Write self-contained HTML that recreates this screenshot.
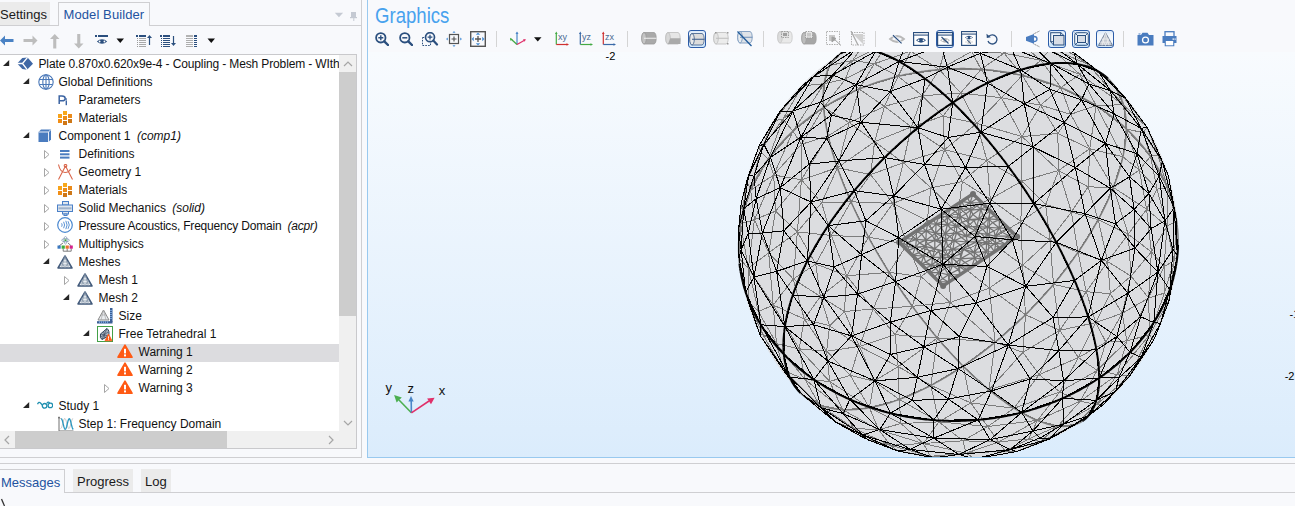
<!DOCTYPE html>
<html><head><meta charset="utf-8">
<style>
*{margin:0;padding:0;box-sizing:border-box}
html,body{width:1295px;height:506px;overflow:hidden;background:#f8f9fc;font-family:"Liberation Sans",sans-serif;color:#1a1a1a}
.abs{position:absolute}
.tt{position:absolute;height:18px;line-height:18px;font-size:12px;white-space:nowrap;color:#111}
.tt i{font-style:italic}
.sep{position:absolute;width:1px;background:#d4d4d4}
</style></head><body>
<!-- left tabs -->
<div class="abs" style="left:0;top:2px;width:50px;height:23px;background:#ebebeb"></div>
<div class="abs" style="left:0;top:2px;height:23px;line-height:25px;font-size:13px;color:#1a1a1a">Settings</div>
<div class="abs" style="left:0;top:25px;width:58px;height:1px;background:#cfcfd2"></div>
<div class="abs" style="left:58px;top:2px;width:92px;height:24px;border:1px solid #cfcfd2;border-bottom:none;background:#f8f9fc"></div>
<div class="abs" style="left:63.5px;top:2px;height:23px;line-height:25px;font-size:13px;color:#2353a0;letter-spacing:0.1px">Model Builder</div>
<div class="abs" style="left:150px;top:25px;width:212px;height:1px;background:#cfcfd2"></div>
<svg class="abs" style="left:334px;top:12px" width="24" height="10"><path d="M0.8 0.7 L9.1 0.7 L4.95 5.2 Z" fill="#c5cad3"/><rect x="17" y="-1" width="5" height="6.2" fill="#c5cad3"/><rect x="16" y="5" width="7" height="1.2" fill="#c5cad3"/><rect x="19.3" y="6" width="1" height="3" fill="#c5cad3"/></svg>
<!-- panel right border -->
<div class="abs" style="left:361px;top:0;width:1px;height:458px;background:#cfcfd2"></div>
<div class="abs" style="left:0;top:457px;width:362px;height:1px;background:#cfcfd2"></div>
<!-- tree box -->
<div class="abs" style="left:-1px;top:54px;width:358px;height:395px;border:1px solid #c9c9cc;background:#fff;overflow:hidden">
 <div class="abs" style="left:0;top:0;width:339px;height:376px;overflow:hidden">
<svg style="position:absolute;left:2.8px;top:4.5px" width="7" height="7" viewBox="0 0 7 7"><path d="M6.2 0 L6.2 6 L0 6 Z" fill="#262626"/></svg>
<svg style="position:absolute;left:17px;top:1px" width="17" height="16" viewBox="0 0 17 16"><path d="M0.2 7.5 L5.3 2 L10.6 1.4 L16 7.7 L10 13.8 L5.3 13.1 Z" fill="#3f67a5"/><path d="M0 7.5 L5.5 7.5 L10.6 1.4 M5.5 7.5 L10.4 13.8" fill="none" stroke="#fff" stroke-width="1.3"/></svg>
<div class="tt" style="left:38.5px;top:0px;letter-spacing:-0.13px;">Plate 0.870x0.620x9e-4 - Coupling - Mesh Problem - WIth</div>
<svg style="position:absolute;left:22.8px;top:22.5px" width="7" height="7" viewBox="0 0 7 7"><path d="M6.2 0 L6.2 6 L0 6 Z" fill="#262626"/></svg>
<svg style="position:absolute;left:38px;top:19px" width="16" height="16" viewBox="0 0 16 16"><g fill="none" stroke="#4a78b8" stroke-width="1.1"><circle cx="8" cy="8" r="7.2"/><ellipse cx="8" cy="8" rx="3.2" ry="7.2"/><path d="M8 0.8 V15.2 M1.5 5.5 H14.5 M1.5 10.5 H14.5"/></g></svg>
<div class="tt" style="left:58.5px;top:18px;">Global Definitions</div>
<svg style="position:absolute;left:57.6px;top:40px" width="12" height="14" viewBox="0 0 12 14"><path d="M1.2 9 V1 H4 Q7.2 1 7.2 3.4 Q7.2 5.8 4 5.8 H1.2" fill="none" stroke="#3c64a2" stroke-width="1.5"/><rect x="7.6" y="3.4" width="1.4" height="1.3" fill="#3c64a2"/><rect x="7.6" y="5.4" width="1.4" height="4.8" fill="#3c64a2"/></svg>
<div class="tt" style="left:78.5px;top:36px;">Parameters</div>
<svg style="position:absolute;left:58px;top:56px" width="16" height="15" viewBox="0 0 16 15"><g shape-rendering="crispEdges"><rect x="5" y="0" width="4" height="4" fill="#f7a81b"/><rect x="0" y="3" width="4" height="4" fill="#f8a31a"/><rect x="5" y="5" width="4" height="4" fill="#ec8d18"/><rect x="10" y="3" width="4" height="4" fill="#ea8a1a"/><rect x="0" y="8" width="4" height="4" fill="#f18e16"/><rect x="10" y="8" width="4" height="4" fill="#cd7818"/><rect x="5" y="10" width="4" height="4" fill="#cf7616"/></g></svg>
<div class="tt" style="left:78.5px;top:54px;">Materials</div>
<svg style="position:absolute;left:22.8px;top:76.5px" width="7" height="7" viewBox="0 0 7 7"><path d="M6.2 0 L6.2 6 L0 6 Z" fill="#262626"/></svg>
<svg style="position:absolute;left:38px;top:74px" width="14" height="14" viewBox="0 0 14 14"><path d="M0.5 3 L3 0.5 L13 0.5 L13 10.5 L10.5 13 L0.5 13 Z" fill="#4a7cbf"/><path d="M0.5 3 L10.5 3 L10.5 13 M10.5 3 L13 0.5" fill="none" stroke="#e8eef7" stroke-width="1"/></svg>
<div class="tt" style="left:58.5px;top:72px;">Component 1 <i style="margin-left:3px">(comp1)</i></div>
<svg style="position:absolute;left:43.5px;top:94.5px" width="7" height="10" viewBox="0 0 7 10"><path d="M0.5 0.5 L5 4.5 L0.5 8.5 Z" fill="none" stroke="#a6a6a6" stroke-width="1"/></svg>
<svg style="position:absolute;left:59.7px;top:94.5px" width="10" height="9" viewBox="0 0 10 9"><g fill="#4a7cbf"><rect x="0" y="0" width="9.5" height="2"/><rect x="0" y="3.3" width="9.5" height="2"/><rect x="0" y="6.6" width="9.5" height="2"/></g></svg>
<div class="tt" style="left:78.5px;top:90px;">Definitions</div>
<svg style="position:absolute;left:43.5px;top:112.5px" width="7" height="10" viewBox="0 0 7 10"><path d="M0.5 0.5 L5 4.5 L0.5 8.5 Z" fill="none" stroke="#a6a6a6" stroke-width="1"/></svg>
<svg style="position:absolute;left:57.5px;top:108.8px" width="16" height="16" viewBox="0 0 16 16"><g fill="none" stroke="#d9664b" stroke-width="1.1"><path d="M7.5 2 L0.5 15.5 M7.5 2 L14.5 15.5"/><circle cx="7.5" cy="1.8" r="1.3"/><path d="M0.5 0.5 Q2 8 7 8.5 Q11 8.5 12.5 5"/></g></svg>
<div class="tt" style="left:78.5px;top:108px;">Geometry 1</div>
<svg style="position:absolute;left:43.5px;top:130.5px" width="7" height="10" viewBox="0 0 7 10"><path d="M0.5 0.5 L5 4.5 L0.5 8.5 Z" fill="none" stroke="#a6a6a6" stroke-width="1"/></svg>
<svg style="position:absolute;left:58px;top:128px" width="16" height="15" viewBox="0 0 16 15"><g shape-rendering="crispEdges"><rect x="5" y="0" width="4" height="4" fill="#f7a81b"/><rect x="0" y="3" width="4" height="4" fill="#f8a31a"/><rect x="5" y="5" width="4" height="4" fill="#ec8d18"/><rect x="10" y="3" width="4" height="4" fill="#ea8a1a"/><rect x="0" y="8" width="4" height="4" fill="#f18e16"/><rect x="10" y="8" width="4" height="4" fill="#cd7818"/><rect x="5" y="10" width="4" height="4" fill="#cf7616"/></g></svg>
<div class="tt" style="left:78.5px;top:126px;">Materials</div>
<svg style="position:absolute;left:43.5px;top:148.5px" width="7" height="10" viewBox="0 0 7 10"><path d="M0.5 0.5 L5 4.5 L0.5 8.5 Z" fill="none" stroke="#a6a6a6" stroke-width="1"/></svg>
<svg style="position:absolute;left:57.2px;top:145.5px" width="16" height="15" viewBox="0 0 16 15"><g stroke="#4a80c8" stroke-width="1" fill="#dfe6ee"><rect x="5.5" y="0.5" width="6" height="3.5"/><rect x="0.5" y="4" width="15" height="6.5"/><rect x="5.5" y="10.5" width="6" height="2.5"/><rect x="7" y="13" width="3" height="1.5"/></g><rect x="1.5" y="6.3" width="13" height="2" fill="#9fb3cc"/></svg>
<div class="tt" style="left:78.5px;top:144px;">Solid Mechanics <i style="margin-left:3px">(solid)</i></div>
<svg style="position:absolute;left:43.5px;top:166.5px" width="7" height="10" viewBox="0 0 7 10"><path d="M0.5 0.5 L5 4.5 L0.5 8.5 Z" fill="none" stroke="#a6a6a6" stroke-width="1"/></svg>
<svg style="position:absolute;left:57px;top:162.2px" width="16" height="16" viewBox="0 0 16 16"><circle cx="8" cy="8" r="7.3" fill="none" stroke="#4a88d0" stroke-width="1.2"/><g fill="none" stroke="#4a88d0" stroke-width="0.9"><path d="M4.6 6.3 Q5.8 8 4.6 9.7"/><path d="M6.6 4.8 Q8.6 8 6.6 11.2"/><path d="M8.8 3.8 Q11.4 8 8.8 12.2"/><path d="M11 4.2 Q13.6 8 11 11.8"/></g></svg>
<div class="tt" style="left:78.5px;top:162px;letter-spacing:-0.2px;">Pressure Acoustics, Frequency Domain <i style="margin-left:3px">(acpr)</i></div>
<svg style="position:absolute;left:43.5px;top:184.5px" width="7" height="10" viewBox="0 0 7 10"><path d="M0.5 0.5 L5 4.5 L0.5 8.5 Z" fill="none" stroke="#a6a6a6" stroke-width="1"/></svg>
<svg style="position:absolute;left:57px;top:180.5px" width="17" height="17" viewBox="0 0 17 17"><g fill="none" stroke="#8aa0b8" stroke-width="0.9"><ellipse cx="8.5" cy="4.2" rx="3.8" ry="1.6"/><ellipse cx="8.5" cy="4.2" rx="1.6" ry="3.8"/></g><circle cx="8.5" cy="4.2" r="1" fill="#3cac3c"/><g fill="none" stroke="#6f6f6f" stroke-width="0.9"><path d="M6.2 12.5 V15.2 H14.2 V12.5 M10.2 12.5 V15.2"/><path d="M2.2 9.8 L6 7 M14.2 9.8 L11 7"/></g><rect x="0.5" y="9.5" width="3.2" height="3.2" fill="#3a78c0"/><rect x="4.6" y="9.5" width="3.2" height="3.2" fill="#3cac3c"/><rect x="8.6" y="9.5" width="3.2" height="3.2" fill="#e8742c"/><rect x="12.6" y="9.5" width="3.2" height="3.2" fill="#d6208c"/></svg>
<div class="tt" style="left:78.5px;top:180px;">Multiphysics</div>
<svg style="position:absolute;left:42.8px;top:202.5px" width="7" height="7" viewBox="0 0 7 7"><path d="M6.2 0 L6.2 6 L0 6 Z" fill="#262626"/></svg>
<svg style="position:absolute;left:57px;top:199.7px" width="16" height="14" viewBox="0 0 16 14"><path d="M8 1 L15 13 L1 13 Z" fill="#e9edf1" stroke="#41597a" stroke-width="1.5" stroke-linejoin="round"/><g stroke="#8595a8" stroke-width="0.7" fill="none"><path d="M4.5 7 L11.5 7 M2.8 10 L13.2 10 M8 1 L4.5 13 M8 1 L11.5 13 M4.5 7 L8 13 L11.5 7 M6.2 4 L9.8 4"/></g></svg>
<div class="tt" style="left:78.5px;top:198px;">Meshes</div>
<svg style="position:absolute;left:63.5px;top:220.5px" width="7" height="10" viewBox="0 0 7 10"><path d="M0.5 0.5 L5 4.5 L0.5 8.5 Z" fill="none" stroke="#a6a6a6" stroke-width="1"/></svg>
<svg style="position:absolute;left:77px;top:217.7px" width="16" height="14" viewBox="0 0 16 14"><path d="M8 1 L15 13 L1 13 Z" fill="#e9edf1" stroke="#41597a" stroke-width="1.5" stroke-linejoin="round"/><g stroke="#8595a8" stroke-width="0.7" fill="none"><path d="M4.5 7 L11.5 7 M2.8 10 L13.2 10 M8 1 L4.5 13 M8 1 L11.5 13 M4.5 7 L8 13 L11.5 7 M6.2 4 L9.8 4"/></g></svg>
<div class="tt" style="left:98.5px;top:216px;">Mesh 1</div>
<svg style="position:absolute;left:62.8px;top:238.5px" width="7" height="7" viewBox="0 0 7 7"><path d="M6.2 0 L6.2 6 L0 6 Z" fill="#262626"/></svg>
<svg style="position:absolute;left:77px;top:235.7px" width="16" height="14" viewBox="0 0 16 14"><path d="M8 1 L15 13 L1 13 Z" fill="#e9edf1" stroke="#41597a" stroke-width="1.5" stroke-linejoin="round"/><g stroke="#8595a8" stroke-width="0.7" fill="none"><path d="M4.5 7 L11.5 7 M2.8 10 L13.2 10 M8 1 L4.5 13 M8 1 L11.5 13 M4.5 7 L8 13 L11.5 7 M6.2 4 L9.8 4"/></g></svg>
<div class="tt" style="left:98.5px;top:234px;">Mesh 2</div>
<svg style="position:absolute;left:97px;top:253px" width="16" height="16" viewBox="0 0 16 16"><path d="M6.5 2 L12 12 L1 12 Z" fill="#e9ecef" stroke="#8a8a8a" stroke-width="1"/><g stroke="#a0a0a0" stroke-width="0.6"><path d="M3.8 7 L9.2 7 M6.5 2 L4 12 M6.5 2 L9 12"/></g><g fill="#3a5f95"><rect x="13" y="0" width="2.5" height="14"/><rect x="0" y="13.2" width="15.5" height="2.3"/></g><g fill="#86b0e6"><rect x="13" y="2" width="2.5" height="0.8"/><rect x="13" y="4" width="2.5" height="0.8"/><rect x="13" y="6" width="2.5" height="0.8"/><rect x="13" y="8" width="2.5" height="0.8"/><rect x="13" y="10" width="2.5" height="0.8"/><rect x="2" y="13.2" width="0.8" height="2.3"/><rect x="4" y="13.2" width="0.8" height="2.3"/><rect x="6" y="13.2" width="0.8" height="2.3"/><rect x="8" y="13.2" width="0.8" height="2.3"/><rect x="10" y="13.2" width="0.8" height="2.3"/></g></svg>
<div class="tt" style="left:118.5px;top:252px;">Size</div>
<svg style="position:absolute;left:82.8px;top:274.5px" width="7" height="7" viewBox="0 0 7 7"><path d="M6.2 0 L6.2 6 L0 6 Z" fill="#262626"/></svg>
<svg style="position:absolute;left:97px;top:270.5px" width="16" height="16" viewBox="0 0 16 16"><rect x="0.5" y="0.5" width="15" height="15" fill="#ffffff" stroke="#43a047" stroke-width="1"/><path d="M10 2.5 Q13 5 11.5 10 L5 13.5 Q2.5 12 3.5 8 Z" fill="#aab4c0" stroke="#2f4258" stroke-width="1"/><path d="M10 2.5 L5 13.5 M3.5 8 L11.5 10 M6.5 5 L8 12 M4 11 L11 6" stroke="#3d4f66" stroke-width="0.7" fill="none"/><path d="M11.5 8 L15 14.8 L8 14.8 Z" fill="#ff5a14" stroke="#ff5a14" stroke-width="0.8" stroke-linejoin="round"/><rect x="11.05" y="10.3" width="0.9" height="2.4" fill="#fff"/><rect x="11.05" y="13.2" width="0.9" height="0.9" fill="#fff"/></svg>
<div class="tt" style="left:118.5px;top:270px;">Free Tetrahedral 1</div>
<div style="position:absolute;left:0;top:289px;width:339px;height:18px;background:#dcdcdf"></div>
<svg style="position:absolute;left:117px;top:289.3px" width="16" height="15" viewBox="0 0 16 15"><path d="M8 1.2 L15 13.2 L1 13.2 Z" fill="#ff5a14" stroke="#ff5a14" stroke-width="1.6" stroke-linejoin="round"/><rect x="7" y="4.8" width="2" height="4.6" fill="#fff"/><rect x="7" y="10.4" width="2" height="2" fill="#fff"/></svg>
<div class="tt" style="left:138.5px;top:288px;">Warning 1</div>
<svg style="position:absolute;left:117px;top:307.3px" width="16" height="15" viewBox="0 0 16 15"><path d="M8 1.2 L15 13.2 L1 13.2 Z" fill="#ff5a14" stroke="#ff5a14" stroke-width="1.6" stroke-linejoin="round"/><rect x="7" y="4.8" width="2" height="4.6" fill="#fff"/><rect x="7" y="10.4" width="2" height="2" fill="#fff"/></svg>
<div class="tt" style="left:138.5px;top:306px;">Warning 2</div>
<svg style="position:absolute;left:103.5px;top:328.5px" width="7" height="10" viewBox="0 0 7 10"><path d="M0.5 0.5 L5 4.5 L0.5 8.5 Z" fill="none" stroke="#a6a6a6" stroke-width="1"/></svg>
<svg style="position:absolute;left:117px;top:325.3px" width="16" height="15" viewBox="0 0 16 15"><path d="M8 1.2 L15 13.2 L1 13.2 Z" fill="#ff5a14" stroke="#ff5a14" stroke-width="1.6" stroke-linejoin="round"/><rect x="7" y="4.8" width="2" height="4.6" fill="#fff"/><rect x="7" y="10.4" width="2" height="2" fill="#fff"/></svg>
<div class="tt" style="left:138.5px;top:324px;">Warning 3</div>
<svg style="position:absolute;left:22.8px;top:346.5px" width="7" height="7" viewBox="0 0 7 7"><path d="M6.2 0 L6.2 6 L0 6 Z" fill="#262626"/></svg>
<svg style="position:absolute;left:37px;top:345.5px" width="16" height="9" viewBox="0 0 16 9"><g fill="none" stroke="#2090b0" stroke-width="1.3"><path d="M0.5 3.2 Q1.8 0.2 3.5 2 L5.6 4.4"/><circle cx="7.6" cy="4.8" r="2.3"/><circle cx="13.4" cy="4.4" r="2.3"/><path d="M9.8 2.6 Q11 0 12.6 2"/></g></svg>
<div class="tt" style="left:58.5px;top:342px;">Study 1</div>
<svg style="position:absolute;left:57.5px;top:360.5px" width="16" height="16" viewBox="0 0 16 16"><path d="M2.70 12.50 L3.01 12.36 L3.32 11.96 L3.62 11.30 L3.93 10.44 L4.24 9.41 L4.54 8.28 L4.85 7.11 L5.16 5.95 L5.47 4.89 L5.78 3.96 L6.08 3.24 L6.39 2.74 L6.70 2.52 L7.00 2.56 L7.31 2.88 L7.62 3.45 L7.93 4.25 L8.23 5.23 L8.54 6.33 L8.85 7.50 L9.16 8.67 L9.46 9.77 L9.77 10.75 L10.08 11.55 L10.39 12.12 L10.70 12.44 L11.00 12.48 L11.31 12.26 L11.62 11.76 L11.93 11.04 L12.23 10.11 L12.54 9.05 L12.85 7.89 L13.16 6.72 L13.46 5.59 L13.77 4.56 L14.08 3.70 L14.39 3.04 L14.69 2.64 L15.00 2.50" fill="none" stroke="#c4c4c4" stroke-width="1"/><path d="M3.20 2.70 L3.50 2.85 L3.81 3.28 L4.11 3.97 L4.41 4.88 L4.71 5.97 L5.02 7.17 L5.32 8.42 L5.62 9.64 L5.92 10.77 L6.23 11.75 L6.53 12.52 L6.83 13.04 L7.13 13.28 L7.44 13.23 L7.74 12.90 L8.04 12.29 L8.34 11.44 L8.65 10.41 L8.95 9.24 L9.25 8.00 L9.55 6.76 L9.86 5.59 L10.16 4.56 L10.46 3.71 L10.76 3.10 L11.07 2.77 L11.37 2.72 L11.67 2.96 L11.97 3.48 L12.28 4.25 L12.58 5.23 L12.88 6.36 L13.18 7.58 L13.48 8.83 L13.79 10.03 L14.09 11.12 L14.39 12.03 L14.70 12.72 L15.00 13.15 L15.30 13.30" fill="none" stroke="#2a98c0" stroke-width="1.3"/><g fill="none" stroke="#707070" stroke-width="1"><path d="M1 1.5 V15 H15.5"/><path d="M-0.2 2.8 L1 0.8 L2.2 2.8"/></g></svg>
<div class="tt" style="left:78.5px;top:360px;">Step 1: Frequency Domain</div>
 </div>
 <!-- vscroll -->
 <div class="abs" style="left:339px;top:0;width:17px;height:393px;background:#f0f0f0"></div>
 <div class="abs" style="left:339px;top:17px;width:17px;height:244px;background:#cdcdcd"></div>
 <svg class="abs" style="left:343px;top:5px" width="10" height="8"><path d="M1 6 L5 2 L9 6" fill="none" stroke="#a6a6a6" stroke-width="1.2"/></svg>
 <svg class="abs" style="left:343px;top:364px" width="10" height="8"><path d="M1 2 L5 6 L9 2" fill="none" stroke="#a6a6a6" stroke-width="1.2"/></svg>
 <!-- hscroll -->
 <div class="abs" style="left:0;top:376px;width:339px;height:17px;background:#f0f0f0"></div>
 <div class="abs" style="left:15px;top:376px;width:212px;height:17px;background:#cdcdcd"></div>
 <svg class="abs" style="left:3px;top:380px" width="8" height="10"><path d="M6 1 L2 5 L6 9" fill="none" stroke="#a6a6a6" stroke-width="1.2"/></svg>
 <svg class="abs" style="left:326.5px;top:380px" width="8" height="10"><path d="M2 1 L6 5 L2 9" fill="none" stroke="#a6a6a6" stroke-width="1.2"/></svg>
</div>
<!-- left toolbar -->
<svg style="position:absolute;left:0px;top:35px" width="14" height="11" viewBox="0 0 14 11"><path d="M0 5.5 L5 0.5 L5 4 L13.5 4 L13.5 7 L5 7 L5 10.5 Z" fill="#4a82c4"/></svg>
<svg style="position:absolute;left:23px;top:35px" width="15" height="11" viewBox="0 0 15 11"><path d="M14.5 5.5 L9.5 0.5 L9.5 4 L0.5 4 L0.5 7 L9.5 7 L9.5 10.5 Z" fill="#bdbdbd"/></svg>
<svg style="position:absolute;left:50px;top:34px" width="10" height="15" viewBox="0 0 10 15"><path d="M4.75 0 L9.5 5 L6.3 5 L6.3 14.5 L3.2 14.5 L3.2 5 L0 5 Z" fill="#bdbdbd"/></svg>
<svg style="position:absolute;left:74px;top:34px" width="10" height="15" viewBox="0 0 10 15"><path d="M4.75 14.5 L9.5 9.5 L6.3 9.5 L6.3 0 L3.2 0 L3.2 9.5 L0 9.5 Z" fill="#bdbdbd"/></svg>
<svg style="position:absolute;left:95px;top:34px" width="14" height="12" viewBox="0 0 14 12"><g shape-rendering="crispEdges"><rect x="0" y="1" width="2" height="2" fill="#2b4f7e"/><rect x="3" y="1" width="10" height="2" fill="#2b4f7e"/></g><path d="M1.8 7.5 Q7 2.8 12.2 7.5 Q7 12.2 1.8 7.5 Z" fill="#2b4f7e"/><circle cx="4.6" cy="7.5" r="0.9" fill="#fff"/><circle cx="9.4" cy="7.5" r="0.9" fill="#fff"/></svg>
<svg style="position:absolute;left:116px;top:38px" width="9" height="6" viewBox="0 0 9 6"><path d="M0.5 0.5 L8 0.5 L4.25 5 Z" fill="#111"/></svg>
<svg style="position:absolute;left:136px;top:34px" width="17" height="14" viewBox="0 0 17 14"><g shape-rendering="crispEdges"><rect x="0" y="1" width="2" height="2" fill="#2b4f7e"/><rect x="3" y="1" width="7" height="2" fill="#2b4f7e"/><rect x="1.2" y="4" width="1" height="1" fill="#9a9a9a"/><rect x="3" y="4" width="7" height="1" fill="#a9a9a9"/><rect x="1.2" y="6" width="1" height="1" fill="#9a9a9a"/><rect x="3" y="6" width="7" height="1" fill="#a9a9a9"/><rect x="1.2" y="8" width="1" height="1" fill="#9a9a9a"/><rect x="3" y="8" width="7" height="1" fill="#a9a9a9"/><rect x="1.2" y="10" width="1" height="1" fill="#9a9a9a"/><rect x="3" y="10" width="7" height="1" fill="#a9a9a9"/><rect x="1.2" y="12" width="1" height="1" fill="#9a9a9a"/><rect x="3" y="12" width="7" height="1" fill="#a9a9a9"/></g><path d="M13.5 11 V3" stroke="#2b4f7e" stroke-width="1.2" fill="none"/><path d="M11 4 L13.5 1 L16 4 Z" fill="#2b4f7e"/></svg>
<svg style="position:absolute;left:160px;top:34px" width="17" height="14" viewBox="0 0 17 14"><g shape-rendering="crispEdges"><rect x="0" y="1" width="2" height="2" fill="#2b4f7e"/><rect x="3" y="1" width="7" height="2" fill="#2b4f7e"/><rect x="1.2" y="4" width="1" height="1" fill="#2b4f7e"/><rect x="3" y="4" width="7" height="1" fill="#2b4f7e"/><rect x="1.2" y="6" width="1" height="1" fill="#2b4f7e"/><rect x="3" y="6" width="7" height="1" fill="#2b4f7e"/><rect x="1.2" y="8" width="1" height="1" fill="#2b4f7e"/><rect x="3" y="8" width="7" height="1" fill="#2b4f7e"/><rect x="1.2" y="10" width="1" height="1" fill="#2b4f7e"/><rect x="3" y="10" width="7" height="1" fill="#2b4f7e"/><rect x="1.2" y="12" width="1" height="1" fill="#2b4f7e"/><rect x="3" y="12" width="7" height="1" fill="#2b4f7e"/></g><path d="M13.5 2 V10" stroke="#2b4f7e" stroke-width="1.2" fill="none"/><path d="M11 9 L13.5 12 L16 9 Z" fill="#2b4f7e"/></svg>
<svg style="position:absolute;left:186px;top:34px" width="12" height="14" viewBox="0 0 12 14"><g shape-rendering="crispEdges"><rect x="0" y="1" width="7" height="2" fill="#b3b3b3"/><rect x="8" y="1" width="3" height="2" fill="#2b4f7e"/><rect x="0" y="4" width="7" height="1" fill="#adadad"/><rect x="8" y="4" width="3" height="1" fill="#2b4f7e"/><rect x="0" y="6" width="7" height="1" fill="#adadad"/><rect x="8" y="6" width="3" height="1" fill="#2b4f7e"/><rect x="0" y="8" width="7" height="1" fill="#adadad"/><rect x="8" y="8" width="3" height="1" fill="#2b4f7e"/><rect x="0" y="10" width="7" height="1" fill="#adadad"/><rect x="8" y="10" width="3" height="1" fill="#2b4f7e"/><rect x="0" y="12" width="7" height="1" fill="#adadad"/><rect x="8" y="12" width="3" height="1" fill="#2b4f7e"/></g></svg>
<svg style="position:absolute;left:207px;top:38px" width="9" height="6" viewBox="0 0 9 6"><path d="M0.5 0.5 L8 0.5 L4.25 5 Z" fill="#111"/></svg>
<!-- graphics -->
<div class="abs" style="left:367px;top:0;width:928px;height:458px;border-left:1px solid #99c9ef;border-bottom:1px solid #99c9ef;background:#f8f9fc"></div>
<div class="abs" style="left:374.5px;top:2.6px;font-size:22px;line-height:26px;color:#48a2ee;transform:scaleX(0.845);transform-origin:0 0">Graphics</div>
<div class="abs" style="left:368px;top:52px;width:927px;height:405px;background:linear-gradient(#f8fbfe,#dbecfc)"></div>
<div class="abs" style="left:368px;top:52px;width:927px;height:405px;overflow:hidden">
<svg width="927" height="405" style="position:absolute;left:0;top:0">
<circle cx="590.1" cy="187.6" r="220.0" fill="#dcdde0"/>
<path d="M595.0 388.8L555.3 391.5M595.0 388.8L598.1 401.2M598.1 401.2L555.3 391.5M607.0 406.9L598.1 401.2M637.1 399.2L598.1 401.2M637.1 399.2L607.0 406.9M433.8 342.2L451.7 353.2M451.7 353.2L467.2 369.9M451.7 353.2L415.4 318.4M474.6 357.7L437.1 327.6M451.7 353.2L474.6 357.7M451.7 353.2L437.1 327.6M437.1 327.6L415.4 318.4M783.4 199.9L760.2 182.2M763.0 224.1L783.4 199.9M763.0 224.1L760.2 182.2M763.0 224.1L780.6 246.0M783.4 199.9L780.6 246.0M654.9 300.4L691.7 278.3M671.2 322.7L691.7 278.3M671.2 322.7L654.9 300.4M394.4 281.8L415.4 318.4M394.4 281.8L392.2 283.6M394.4 281.8L380.1 249.2M595.0 388.8L570.9 369.9M570.9 369.9L555.3 391.5M555.3 391.5L562.5 404.3M598.1 401.2L562.5 404.3M607.0 406.9L562.5 404.3M566.1 405.8L562.5 404.3M562.8 333.4L595.1 314.1M595.1 314.1L602.8 350.9M562.8 333.4L602.8 350.9M562.8 333.4L570.9 369.9M531.2 347.5L570.9 369.9M531.2 347.5L562.8 333.4M602.8 350.9L570.9 369.9M707.2 372.6L672.3 389.7M672.3 389.7L681.6 387.0M637.1 399.2L672.3 389.7M637.1 399.2L660.8 386.9M672.3 389.7L660.8 386.9M429.4 179.9L425.2 227.0M429.4 179.9L447.7 212.0M425.2 227.0L447.7 212.0M783.4 199.9L796.1 214.5M783.4 199.9L799.0 174.3M799.0 174.3L796.1 214.5M780.6 246.0L796.1 214.5M796.4 241.1L796.1 214.5M780.6 246.0L796.4 241.1M805.9 209.0L796.1 214.5M796.4 241.1L805.9 209.0M805.9 209.0L799.0 174.3M671.2 322.7L710.4 305.5M710.4 305.5L691.7 278.3M754.2 261.3L758.9 288.9M737.9 290.2L758.9 288.9M737.9 290.2L754.2 261.3M780.6 246.0L754.2 261.3M780.6 246.0L758.9 288.9M763.0 224.1L754.2 261.3M739.7 209.6L760.2 182.2M763.0 224.1L739.7 209.6M718.3 239.7L739.7 209.6M710.0 200.4L718.3 239.7M710.0 200.4L739.7 209.6M621.0 337.8L654.9 300.4M621.0 337.8L671.2 322.7M621.0 337.8L602.8 350.9M595.1 314.1L621.0 337.8M372.6 171.8L371.0 206.2M372.6 171.8L380.3 216.3M371.0 206.2L380.3 216.3M380.3 216.3L380.1 249.2M371.0 206.2L380.1 249.2M437.1 327.6L408.5 291.6M415.4 318.4L408.5 291.6M394.4 281.8L408.5 291.6M394.4 281.8L390.4 259.5M390.4 259.5L380.1 249.2M390.4 259.5L380.3 216.3M405.2 253.1L380.3 216.3M390.4 259.5L405.2 253.1M405.2 253.1L408.5 291.6M390.4 259.5L408.5 291.6M400.7 200.8L429.4 179.9M400.7 200.8L425.2 227.0M400.7 200.8L405.2 253.1M400.7 200.8L380.3 216.3M425.2 227.0L405.2 253.1M746.1 33.3L779.0 75.1M692.9 35.6L711.8 22.3M728.1 53.6L711.8 22.3M728.1 53.6L692.9 35.6M682.8 -3.9L720.2 12.4M720.2 12.4L711.8 22.3M682.8 -3.9L711.8 22.3M474.6 357.7L485.8 376.4M474.6 357.7L510.6 377.8M510.6 377.8L485.8 376.4M451.7 353.2L485.8 376.4M498.6 387.3L485.8 376.4M485.8 376.4L467.2 369.9M501.4 355.7L510.6 377.8M474.6 357.7L501.4 355.7M555.3 391.5L532.9 371.5M510.6 377.8L555.3 391.5M510.6 377.8L532.9 371.5M570.9 369.9L532.9 371.5M501.4 355.7L532.9 371.5M531.2 347.5L532.9 371.5M501.4 355.7L531.2 347.5M529.9 399.1L562.5 404.3M522.5 393.3L510.6 377.8M522.5 393.3L555.3 391.5M522.5 393.3L562.5 404.3M522.5 393.3L498.6 387.3M522.5 393.3L485.8 376.4M522.5 393.3L529.9 399.1M595.1 314.1L569.3 285.9M562.8 333.4L569.3 285.9M637.1 399.2L649.0 399.5M672.3 389.7L649.0 399.5M685.5 232.4L718.3 239.7M718.3 239.7L691.7 278.3M685.5 232.4L691.7 278.3M685.5 232.4L710.0 200.4M685.5 232.4L682.0 188.0M710.0 200.4L682.0 188.0M685.5 232.4L654.6 213.3M682.0 188.0L654.6 213.3M425.0 79.1L433.4 92.3M405.7 123.0L433.4 92.3M425.0 79.1L405.7 123.0M455.6 55.5L425.0 79.1M455.6 55.5L433.4 92.3M425.0 79.1L456.2 31.7M455.6 55.5L456.2 31.7M425.0 79.1L414.9 67.1M456.2 31.7L414.9 67.1M778.6 157.2L771.3 118.1M771.3 118.1L789.0 137.2M778.6 157.2L789.0 137.2M745.3 135.4L778.6 157.2M745.3 135.4L771.3 118.1M778.6 157.2L760.2 182.2M745.3 135.4L760.2 182.2M783.4 199.9L778.6 157.2M778.6 157.2L799.0 174.3M799.0 174.3L789.0 137.2M729.2 318.4L710.4 305.5M737.9 290.2L710.4 305.5M729.2 318.4L737.9 290.2M729.2 318.4L758.9 288.9M727.8 270.6L754.2 261.3M727.8 270.6L737.9 290.2M727.8 270.6L691.7 278.3M718.3 239.7L727.8 270.6M727.8 270.6L710.4 305.5M739.7 209.6L742.3 241.7M763.0 224.1L742.3 241.7M718.3 239.7L742.3 241.7M754.2 261.3L742.3 241.7M727.8 270.6L742.3 241.7M730.2 167.7L760.2 182.2M730.2 167.7L739.7 209.6M730.2 167.7L745.3 135.4M730.2 167.7L720.1 134.9M745.3 135.4L720.1 134.9M710.0 200.4L730.2 167.7M595.0 388.8L619.7 374.5M570.9 369.9L619.7 374.5M602.8 350.9L619.7 374.5M429.4 179.9L407.5 159.2M400.7 200.8L407.5 159.2M755.4 52.7L746.1 33.3M755.4 52.7L779.0 75.1M758.3 76.8L755.4 52.7M758.3 76.8L728.1 53.6M728.1 53.6L755.4 52.7M755.4 52.7L711.8 22.3M755.4 52.7L720.2 12.4M746.1 33.3L720.2 12.4M455.6 55.5L477.4 27.0M456.2 31.7L477.4 27.0M686.8 -9.3L720.2 12.4M682.8 -3.9L686.8 -9.3M761.7 324.0L735.1 352.8M728.6 352.5L735.1 352.8M761.7 324.0L728.6 352.5M707.2 372.6L735.1 352.8M707.2 372.6L728.6 352.5M761.7 324.0L749.2 322.6M728.6 352.5L749.2 322.6M729.2 318.4L749.2 322.6M749.2 322.6L758.9 288.9M761.7 324.0L781.6 282.7M781.6 282.7L749.2 322.6M781.6 282.7L758.9 288.9M781.6 282.7L780.6 246.0M781.6 282.7L796.4 241.1M781.6 282.7L785.6 288.4M595.1 314.1L627.1 290.2M627.1 290.2L569.3 285.9M627.1 290.2L621.0 337.8M627.1 290.2L654.9 300.4M524.9 151.5L559.2 168.8M539.1 192.4L559.2 168.8M524.9 151.5L539.1 192.4M500.5 185.1L539.1 192.4M500.5 185.1L524.9 151.5M469.4 115.7L433.4 127.8M469.4 115.7L453.6 150.8M433.4 127.8L453.6 150.8M433.4 127.8L405.7 123.0M433.4 127.8L433.4 92.3M433.4 127.8L407.5 159.2M407.5 159.2L405.7 123.0M429.4 179.9L453.6 150.8M429.4 179.9L433.4 127.8M483.0 149.8L524.9 151.5M500.5 185.1L483.0 149.8M483.0 149.8L502.6 122.6M502.6 122.6L524.9 151.5M483.0 149.8L469.4 115.7M469.4 115.7L502.6 122.6M483.0 149.8L453.6 150.8M580.7 203.5L539.1 192.4M580.7 203.5L559.2 168.8M502.6 122.6L506.6 89.7M469.4 115.7L506.6 89.7M469.4 115.7L481.2 70.6M481.2 70.6L506.6 89.7M460.1 83.9L481.2 70.6M469.4 115.7L460.1 83.9M460.1 83.9L433.4 127.8M460.1 83.9L433.4 92.3M455.6 55.5L460.1 83.9M455.6 55.5L481.2 70.6M654.0 84.5L608.8 71.4M633.4 45.7L608.8 71.4M633.4 45.7L654.0 84.5M654.0 84.5L672.6 53.2M689.8 81.5L672.6 53.2M689.8 81.5L654.0 84.5M633.4 45.7L672.6 53.2M692.9 35.6L702.7 62.3M728.1 53.6L702.7 62.3M672.6 53.2L702.7 62.3M692.9 35.6L672.6 53.2M689.8 81.5L702.7 62.3M745.3 135.4L721.8 96.7M721.8 96.7L720.1 134.9M689.8 81.5L721.8 96.7M721.8 96.7L702.7 62.3M728.1 53.6L721.8 96.7M425.0 79.1L400.3 107.0M400.3 107.0L405.7 123.0M400.3 107.0L414.9 67.1M400.3 107.0L392.3 99.1M414.9 67.1L392.3 99.1M382.6 138.3L405.7 123.0M400.3 107.0L382.6 138.3M382.6 138.3L392.3 99.1M521.1 220.3L500.5 185.1M521.1 220.3L539.1 192.4M521.1 220.3L478.8 223.8M500.5 185.1L478.8 223.8M436.3 267.1L405.2 253.1M425.2 227.0L436.3 267.1M474.6 357.7L461.7 329.4M437.1 327.6L461.7 329.4M501.4 355.7L461.7 329.4M531.2 347.5L506.1 329.1M501.4 355.7L506.1 329.1M782.4 104.4L789.0 137.2M782.4 104.4L771.3 118.1M758.3 76.8L771.3 118.1M758.3 76.8L782.4 104.4M779.0 75.1L800.3 123.3M789.8 102.8L800.3 123.3M779.0 75.1L789.8 102.8M671.2 322.7L691.8 339.9M710.4 305.5L691.8 339.9M729.2 318.4L691.8 339.9M630.7 390.0L595.0 388.8M630.7 390.0L619.7 374.5M630.7 390.0L598.1 401.2M669.4 368.4L630.7 390.0M669.4 368.4L660.8 386.9M630.7 390.0L660.8 386.9M669.4 368.4L619.7 374.5M630.7 390.0L637.1 399.2M779.0 75.1L775.4 80.9M789.8 102.8L775.4 80.9M755.4 52.7L775.4 80.9M782.4 104.4L789.8 102.8M782.4 104.4L775.4 80.9M758.3 76.8L775.4 80.9M382.6 138.3L378.8 128.7M382.6 138.3L372.6 171.8M372.6 171.8L378.8 128.7M378.8 128.7L392.3 99.1M386.5 167.7L407.5 159.2M400.7 200.8L386.5 167.7M386.5 167.7L380.3 216.3M386.5 167.7L405.7 123.0M382.6 138.3L386.5 167.7M372.6 171.8L386.5 167.7M720.2 12.4L706.1 0.9M472.5 1.6L495.8 -8.1M495.8 -8.1L504.0 -14.9M542.8 -26.0L504.0 -14.9M542.8 -26.0L495.8 -8.1M554.0 -18.0L542.6 -0.8M554.0 -18.0L579.4 -10.8M579.4 -10.8L542.6 -0.8M456.2 31.7L434.2 33.9M434.2 33.9L414.9 67.1M673.0 8.3L636.1 1.2M651.3 -9.7L636.1 1.2M673.0 8.3L651.3 -9.7M673.0 8.3L711.8 22.3M692.9 35.6L673.0 8.3M682.8 -3.9L673.0 8.3M682.8 -3.9L651.3 -9.7M588.5 -26.2L579.4 -10.8M588.5 -26.2L554.0 -18.0M554.0 -18.0L542.8 -26.0M588.5 -26.2L542.8 -26.0M682.8 -3.9L642.3 -23.8M642.3 -23.8L651.3 -9.7M686.8 -9.3L642.3 -23.8M629.9 -27.6L642.3 -23.8M642.3 -23.8L674.2 -15.0M781.6 282.7L800.9 249.1M796.4 241.1L800.9 249.1M800.9 249.1L785.6 288.4M805.9 209.0L800.9 249.1M809.4 203.5L805.9 209.0M657.5 262.7L654.6 213.3M657.5 262.7L685.5 232.4M657.5 262.7L654.9 300.4M627.1 290.2L657.5 262.7M657.5 262.7L691.7 278.3M453.6 150.8L463.3 183.5M483.0 149.8L463.3 183.5M447.7 212.0L463.3 183.5M429.4 179.9L463.3 183.5M500.5 185.1L463.3 183.5M478.8 223.8L463.3 183.5M478.8 223.8L447.7 212.0M721.8 96.7L690.6 118.5M690.6 118.5L720.1 134.9M689.8 81.5L690.6 118.5M690.6 118.5L677.6 152.6M677.6 152.6L653.8 129.1M690.6 118.5L653.8 129.1M654.0 84.5L653.8 129.1M690.6 118.5L654.0 84.5M677.6 152.6L652.9 169.5M677.6 152.6L682.0 188.0M682.0 188.0L652.9 169.5M654.6 213.3L652.9 169.5M620.9 188.6L654.6 213.3M620.9 188.6L652.9 169.5M653.8 129.1L652.9 169.5M703.4 160.0L720.1 134.9M730.2 167.7L703.4 160.0M690.6 118.5L703.4 160.0M677.6 152.6L703.4 160.0M682.0 188.0L703.4 160.0M710.0 200.4L703.4 160.0M618.9 108.5L654.0 84.5M618.9 108.5L653.8 129.1M618.9 108.5L608.8 71.4M618.9 108.5L576.7 97.6M608.8 71.4L576.7 97.6M618.9 108.5L594.3 129.5M594.3 129.5L576.7 97.6M563.0 135.9L559.2 168.8M563.0 135.9L524.9 151.5M563.0 135.9L576.7 97.6M563.0 135.9L594.3 129.5M569.3 285.9L582.4 250.5M569.3 285.9L544.3 254.3M544.3 254.3L582.4 250.5M627.1 290.2L582.4 250.5M654.2 23.3L672.6 53.2M654.2 23.3L633.4 45.7M692.9 35.6L654.2 23.3M654.2 23.3L636.1 1.2M654.2 23.3L673.0 8.3M633.4 45.7L592.7 41.0M608.8 71.4L592.7 41.0M502.6 122.6L535.3 110.7M506.6 89.7L535.3 110.7M576.7 97.6L535.3 110.7M563.0 135.9L535.3 110.7M524.9 151.5L535.3 110.7M754.9 104.8L771.3 118.1M745.3 135.4L754.9 104.8M754.9 104.8L721.8 96.7M758.3 76.8L754.9 104.8M728.1 53.6L754.9 104.8M544.3 254.3L553.1 224.7M544.3 254.3L521.1 220.3M521.1 220.3L553.1 224.7M553.1 224.7L582.4 250.5M580.7 203.5L553.1 224.7M580.7 203.5L582.4 250.5M553.1 224.7L539.1 192.4M431.2 296.9L408.5 291.6M405.2 253.1L431.2 296.9M436.3 267.1L431.2 296.9M458.6 299.2L436.3 267.1M458.6 299.2L431.2 296.9M437.1 327.6L431.2 296.9M431.2 296.9L461.7 329.4M458.6 299.2L461.7 329.4M452.4 244.5L425.2 227.0M452.4 244.5L447.7 212.0M452.4 244.5L436.3 267.1M452.4 244.5L478.8 223.8M461.7 329.4L482.3 323.4M458.6 299.2L482.3 323.4M501.4 355.7L482.3 323.4M506.1 329.1L482.3 323.4M544.3 254.3L527.1 282.7M569.3 285.9L527.1 282.7M799.4 135.5L789.8 102.8M799.4 135.5L800.3 123.3M799.4 135.5L789.0 137.2M799.4 135.5L782.4 104.4M799.4 135.5L799.0 174.3M646.1 356.2L621.0 337.8M646.1 356.2L671.2 322.7M646.1 356.2L691.8 339.9M669.4 368.4L691.8 339.9M669.4 368.4L646.1 356.2M646.1 356.2L619.7 374.5M646.1 356.2L602.8 350.9M712.2 349.3L691.8 339.9M729.2 318.4L712.2 349.3M712.2 349.3L749.2 322.6M728.6 352.5L712.2 349.3M669.4 368.4L712.2 349.3M372.6 171.8L370.6 176.6M391.1 93.7L392.3 99.1M730.6 19.5L720.2 12.4M484.6 8.4L477.4 27.0M456.2 31.7L484.6 8.4M506.3 11.8L477.4 27.0M506.3 11.8L484.6 8.4M434.2 33.9L406.1 68.7M414.9 67.1L406.1 68.7M406.1 68.7L392.3 99.1M617.4 -15.3L579.4 -10.8M588.5 -26.2L617.4 -15.3M617.4 -15.3L651.3 -9.7M617.4 -15.3L636.1 1.2M617.4 -15.3L642.3 -23.8M588.5 -26.2L642.3 -23.8M595.2 -32.3L642.3 -23.8M588.5 -26.2L595.2 -32.3M542.8 -26.0L595.2 -32.3M622.3 147.2L652.9 169.5M622.3 147.2L620.9 188.6M622.3 147.2L653.8 129.1M622.3 147.2L618.9 108.5M622.3 147.2L594.3 129.5M580.7 203.5L621.3 236.0M580.7 203.5L620.9 188.6M620.9 188.6L621.3 236.0M621.3 236.0L582.4 250.5M621.3 236.0L654.6 213.3M657.5 262.7L621.3 236.0M627.1 290.2L621.3 236.0M613.1 17.3L636.1 1.2M654.2 23.3L613.1 17.3M613.1 17.3L633.4 45.7M613.1 17.3L592.7 41.0M458.6 299.2L461.6 273.8M461.6 273.8L436.3 267.1M452.4 244.5L461.6 273.8M569.3 285.9L530.2 314.6M562.8 333.4L530.2 314.6M530.2 314.6L527.1 282.7M531.2 347.5L530.2 314.6M530.2 314.6L506.1 329.1M521.1 220.3L505.1 257.0M544.3 254.3L505.1 257.0M505.1 257.0L527.1 282.7M478.8 223.8L505.1 257.0M808.6 168.9L799.4 135.5M808.6 168.9L805.9 209.0M808.6 168.9L799.0 174.3M690.0 374.0L660.8 386.9M690.0 374.0L669.4 368.4M690.0 374.0L712.2 349.3M707.2 372.6L690.0 374.0M690.0 374.0L672.3 389.7M690.0 374.0L728.6 352.5M372.6 171.8L373.2 151.1M456.2 31.7L461.8 13.5M461.8 13.5L434.2 33.9M461.8 13.5L484.6 8.4M461.8 13.5L495.8 -8.1M495.8 -8.1L484.6 8.4M461.8 13.5L472.5 1.6M506.3 11.8L519.7 -9.2M484.6 8.4L519.7 -9.2M495.8 -8.1L519.7 -9.2M554.0 -18.0L519.7 -9.2M519.7 -9.2L542.6 -0.8M506.3 11.8L542.6 -0.8M542.8 -26.0L519.7 -9.2M622.3 147.2L590.1 161.8M590.1 161.8L620.9 188.6M580.7 203.5L590.1 161.8M590.1 161.8L559.2 168.8M590.1 161.8L594.3 129.5M563.0 135.9L590.1 161.8M603.6 -0.6L636.1 1.2M613.1 17.3L603.6 -0.6M603.6 -0.6L579.4 -10.8M617.4 -15.3L603.6 -0.6M575.0 64.1L608.8 71.4M575.0 64.1L576.7 97.6M575.0 64.1L592.7 41.0M575.0 64.1L554.3 43.8M592.7 41.0L554.3 43.8M506.6 89.7L516.5 54.4M481.2 70.6L516.5 54.4M505.1 257.0L491.5 294.4M527.1 282.7L491.5 294.4M530.2 314.6L491.5 294.4M506.1 329.1L491.5 294.4M491.5 294.4L482.3 323.4M458.6 299.2L491.5 294.4M461.6 273.8L491.5 294.4M543.3 74.9L576.7 97.6M543.3 74.9L535.3 110.7M575.0 64.1L543.3 74.9M543.3 74.9L506.6 89.7M543.3 74.9L516.5 54.4M543.3 74.9L554.3 43.8M516.5 54.4L554.3 43.8M491.1 37.0L477.4 27.0M491.1 37.0L506.3 11.8M491.1 37.0L516.5 54.4M491.1 37.0L481.2 70.6M491.1 37.0L455.6 55.5M571.3 17.6L542.6 -0.8M571.3 17.6L579.4 -10.8M571.3 17.6L603.6 -0.6M613.1 17.3L571.3 17.6M571.3 17.6L592.7 41.0M571.3 17.6L554.3 43.8M476.4 259.5L491.5 294.4M461.6 273.8L476.4 259.5M505.1 257.0L476.4 259.5M452.4 244.5L476.4 259.5M478.8 223.8L476.4 259.5M530.1 24.2L491.1 37.0M530.1 24.2L506.3 11.8M530.1 24.2L516.5 54.4M530.1 24.2L542.6 -0.8M571.3 17.6L530.1 24.2M530.1 24.2L554.3 43.8" stroke="#7d7d7d" stroke-width="1" fill="none" shape-rendering="crispEdges"/>
<path d="M758.3 76.8L757.1 75.7M757.1 75.7L755.8 74.6M755.8 74.6L754.6 73.4M754.6 73.4L753.3 72.3M753.3 72.3L752.1 71.2M752.1 71.2L750.8 70.2M750.8 70.2L749.5 69.1M749.5 69.1L748.2 68.0M748.2 68.0L746.9 67.0M746.9 67.0L745.6 65.9M745.6 65.9L744.2 64.9M744.2 64.9L742.9 63.8M742.9 63.8L741.5 62.8M741.5 62.8L740.1 61.8M740.1 61.8L738.8 60.8M738.8 60.8L737.4 59.8M737.4 59.8L736.0 58.8M736.0 58.8L734.6 57.9M734.6 57.9L733.1 56.9M733.1 56.9L731.7 55.9M731.7 55.9L730.3 55.0M730.3 55.0L728.8 54.1M728.8 54.1L727.4 53.1M727.4 53.1L725.9 52.2M725.9 52.2L724.4 51.3M724.4 51.3L722.9 50.4M722.9 50.4L721.4 49.6M721.4 49.6L719.9 48.7M719.9 48.7L718.4 47.8M718.4 47.8L716.9 47.0M716.9 47.0L715.3 46.1M715.3 46.1L713.8 45.3M713.8 45.3L712.2 44.5M712.2 44.5L710.7 43.7M710.7 43.7L709.1 42.9M709.1 42.9L707.5 42.1M707.5 42.1L705.9 41.4M705.9 41.4L704.3 40.6M704.3 40.6L702.7 39.8M702.7 39.8L701.1 39.1M701.1 39.1L699.5 38.4M699.5 38.4L697.9 37.7M697.9 37.7L696.2 37.0M696.2 37.0L694.6 36.3M694.6 36.3L692.9 35.6M692.9 35.6L691.3 34.9M691.3 34.9L689.6 34.3M689.6 34.3L688.0 33.6M688.0 33.6L686.3 33.0M686.3 33.0L684.6 32.3M684.6 32.3L682.9 31.7M682.9 31.7L681.2 31.1M681.2 31.1L679.5 30.5M679.5 30.5L677.8 30.0M677.8 30.0L676.1 29.4M676.1 29.4L674.3 28.8M674.3 28.8L672.6 28.3M672.6 28.3L670.9 27.8M670.9 27.8L669.1 27.3M669.1 27.3L667.4 26.8M667.4 26.8L665.7 26.3M665.7 26.3L663.9 25.8M663.9 25.8L662.1 25.3M662.1 25.3L660.4 24.9M660.4 24.9L658.6 24.4M658.6 24.4L656.8 24.0M656.8 24.0L655.0 23.6M655.0 23.6L653.3 23.1M653.3 23.1L651.5 22.7M651.5 22.7L649.7 22.4M649.7 22.4L647.9 22.0M647.9 22.0L646.1 21.6M646.1 21.6L644.3 21.3M644.3 21.3L642.5 21.0M642.5 21.0L640.7 20.6M640.7 20.6L638.8 20.3M638.8 20.3L637.0 20.0M637.0 20.0L635.2 19.7M635.2 19.7L633.4 19.5M633.4 19.5L631.5 19.2M631.5 19.2L629.7 19.0M629.7 19.0L627.9 18.7M627.9 18.7L626.0 18.5M626.0 18.5L624.2 18.3M624.2 18.3L622.4 18.1M622.4 18.1L620.5 17.9M620.5 17.9L618.7 17.7M618.7 17.7L616.8 17.6M616.8 17.6L615.0 17.4M615.0 17.4L613.1 17.3M613.1 17.3L611.3 17.2M611.3 17.2L609.4 17.1M609.4 17.1L607.6 17.0M607.6 17.0L605.7 16.9M605.7 16.9L603.8 16.8M603.8 16.8L602.0 16.7M602.0 16.7L600.1 16.7M600.1 16.7L598.3 16.7M598.3 16.7L596.4 16.6M596.4 16.6L594.5 16.6M594.5 16.6L592.7 16.6M592.7 16.6L590.8 16.7M590.8 16.7L589.0 16.7M589.0 16.7L587.1 16.7M587.1 16.7L585.2 16.8M585.2 16.8L583.4 16.8M583.4 16.8L581.5 16.9M581.5 16.9L579.7 17.0M579.7 17.0L577.8 17.1M577.8 17.1L575.9 17.2M575.9 17.2L574.1 17.4M574.1 17.4L572.2 17.5M572.2 17.5L570.4 17.7M570.4 17.7L568.5 17.8M568.5 17.8L566.7 18.0M566.7 18.0L564.8 18.2M564.8 18.2L563.0 18.4M563.0 18.4L561.1 18.6M561.1 18.6L559.3 18.9M559.3 18.9L557.4 19.1M557.4 19.1L555.6 19.4M555.6 19.4L553.8 19.6M553.8 19.6L551.9 19.9M551.9 19.9L550.1 20.2M550.1 20.2L548.3 20.5M548.3 20.5L546.4 20.8M546.4 20.8L544.6 21.2M544.6 21.2L542.8 21.5M542.8 21.5L541.0 21.9M541.0 21.9L539.2 22.2M539.2 22.2L537.3 22.6M537.3 22.6L535.5 23.0M535.5 23.0L533.7 23.4M533.7 23.4L531.9 23.8M531.9 23.8L530.1 24.2M530.1 24.2L528.4 24.7M528.4 24.7L526.6 25.1M526.6 25.1L524.8 25.6M524.8 25.6L523.0 26.1M523.0 26.1L521.2 26.6M521.2 26.6L519.5 27.1M519.5 27.1L517.7 27.6M517.7 27.6L516.0 28.1M516.0 28.1L514.2 28.6M514.2 28.6L512.5 29.2M512.5 29.2L510.7 29.8M510.7 29.8L509.0 30.3M509.0 30.3L507.3 30.9M507.3 30.9L505.5 31.5M505.5 31.5L503.8 32.1M503.8 32.1L502.1 32.7M502.1 32.7L500.4 33.4M500.4 33.4L498.7 34.0M498.7 34.0L497.0 34.7M497.0 34.7L495.3 35.3M495.3 35.3L493.6 36.0M493.6 36.0L492.0 36.7M492.0 36.7L490.3 37.4M490.3 37.4L488.6 38.1M488.6 38.1L487.0 38.8M487.0 38.8L485.3 39.5M485.3 39.5L483.7 40.3M483.7 40.3L482.1 41.0M482.1 41.0L480.5 41.8M480.5 41.8L478.8 42.6M478.8 42.6L477.2 43.4M477.2 43.4L475.6 44.2M475.6 44.2L474.0 45.0M474.0 45.0L472.5 45.8M472.5 45.8L470.9 46.6M470.9 46.6L469.3 47.5M469.3 47.5L467.8 48.3M467.8 48.3L466.2 49.2M466.2 49.2L464.7 50.1M464.7 50.1L463.1 51.0M463.1 51.0L461.6 51.8M461.6 51.8L460.1 52.8M460.1 52.8L458.6 53.7M458.6 53.7L457.1 54.6M457.1 54.6L455.6 55.5M455.6 55.5L454.2 56.5M454.2 56.5L452.7 57.4M452.7 57.4L451.2 58.4M451.2 58.4L449.8 59.4M449.8 59.4L448.4 60.4M448.4 60.4L446.9 61.4M446.9 61.4L445.5 62.4M445.5 62.4L444.1 63.4M444.1 63.4L442.7 64.4M442.7 64.4L441.3 65.4M441.3 65.4L440.0 66.5M440.0 66.5L438.6 67.5M438.6 67.5L437.2 68.6M437.2 68.6L435.9 69.7M435.9 69.7L434.6 70.7M434.6 70.7L433.3 71.8M433.3 71.8L432.0 72.9M432.0 72.9L430.7 74.0M430.7 74.0L429.4 75.2M429.4 75.2L428.1 76.3M428.1 76.3L426.8 77.4M426.8 77.4L425.6 78.6M425.6 78.6L424.3 79.7M424.3 79.7L423.1 80.9M423.1 80.9L421.9 82.0M421.9 82.0L420.7 83.2M420.7 83.2L419.5 84.4M419.5 84.4L418.3 85.6M418.3 85.6L417.2 86.8M417.2 86.8L416.0 88.0M416.0 88.0L414.9 89.2M414.9 89.2L413.8 90.4M413.8 90.4L412.6 91.7M412.6 91.7L411.5 92.9M411.5 92.9L410.4 94.2M410.4 94.2L409.4 95.4M409.4 95.4L408.3 96.7M408.3 96.7L407.3 97.9M407.3 97.9L406.2 99.2M406.2 99.2L405.2 100.5M405.2 100.5L404.2 101.8M404.2 101.8L403.2 103.1M403.2 103.1L402.2 104.4M402.2 104.4L401.2 105.7M401.2 105.7L400.3 107.0M400.3 107.0L399.3 108.4M399.3 108.4L398.4 109.7M398.4 109.7L397.5 111.0M397.5 111.0L396.6 112.4M396.6 112.4L395.7 113.7M395.7 113.7L394.8 115.1M394.8 115.1L394.0 116.4M394.0 116.4L393.2 117.8M393.2 117.8L392.3 119.2M392.3 119.2L391.5 120.6M391.5 120.6L390.7 122.0M390.7 122.0L389.9 123.4M389.9 123.4L389.2 124.7M389.2 124.7L388.4 126.2M388.4 126.2L387.7 127.6M387.7 127.6L386.9 129.0M386.9 129.0L386.2 130.4M386.2 130.4L385.5 131.8M385.5 131.8L384.9 133.2M384.9 133.2L384.2 134.7M384.2 134.7L383.5 136.1M383.5 136.1L382.9 137.6M382.9 137.6L382.3 139.0M382.3 139.0L381.7 140.5M381.7 140.5L381.1 141.9M381.1 141.9L380.5 143.4M380.5 143.4L380.0 144.8M380.0 144.8L379.4 146.3M379.4 146.3L378.9 147.8M378.9 147.8L378.4 149.2M378.4 149.2L377.9 150.7M377.9 150.7L377.4 152.2M377.4 152.2L376.9 153.7M376.9 153.7L376.5 155.2M376.5 155.2L376.1 156.7M376.1 156.7L375.7 158.2M375.7 158.2L375.3 159.7M375.3 159.7L374.9 161.2M374.9 161.2L374.5 162.7M374.5 162.7L374.2 164.2M374.2 164.2L373.8 165.7M373.8 165.7L373.5 167.2M373.5 167.2L373.2 168.7M373.2 168.7L372.9 170.2M372.9 170.2L372.6 171.8M372.6 171.8L372.4 173.3M372.4 173.3L372.2 174.8M372.2 174.8L371.9 176.3M371.9 176.3L371.7 177.8M371.7 177.8L371.5 179.4M371.5 179.4L371.4 180.9M371.4 180.9L371.2 182.4M371.2 182.4L371.1 184.0M371.1 184.0L371.0 185.5M371.0 185.5L370.9 187.0M370.9 187.0L370.8 188.6M370.8 188.6L370.7 190.1M370.7 190.1L370.6 191.6M370.6 191.6L370.6 193.2M370.6 193.2L370.6 194.7M370.6 194.7L370.6 196.2M370.6 196.2L370.6 197.8M370.6 197.8L370.6 199.3M370.6 199.3L370.7 200.8M370.7 200.8L370.7 202.4M370.7 202.4L370.8 203.9M370.8 203.9L370.9 205.4M370.9 205.4L371.0 207.0M371.0 207.0L371.1 208.5M371.1 208.5L371.3 210.0M371.3 210.0L371.5 211.6M810.1 192.7L810.1 191.2M810.1 191.2L810.1 189.6M810.1 189.6L810.1 188.1M810.1 188.1L810.1 186.5M810.1 186.5L810.0 185.0M810.0 185.0L810.0 183.5M810.0 183.5L809.9 181.9M809.9 181.9L809.8 180.4M809.8 180.4L809.7 178.9M809.7 178.9L809.6 177.3M809.6 177.3L809.4 175.8M809.4 175.8L809.3 174.3M809.3 174.3L809.1 172.8M809.1 172.8L808.9 171.2M808.9 171.2L808.7 169.7M808.7 169.7L808.5 168.2M808.5 168.2L808.2 166.7M808.2 166.7L808.0 165.2M808.0 165.2L807.7 163.6M807.7 163.6L807.4 162.1M807.4 162.1L807.1 160.6M807.1 160.6L806.8 159.1M806.8 159.1L806.4 157.6M806.4 157.6L806.1 156.1M806.1 156.1L805.7 154.6M805.7 154.6L805.3 153.1M805.3 153.1L804.9 151.6M804.9 151.6L804.5 150.2M804.5 150.2L804.0 148.7M804.0 148.7L803.6 147.2M803.6 147.2L803.1 145.7M803.1 145.7L802.6 144.3M802.6 144.3L802.1 142.8M802.1 142.8L801.6 141.3M801.6 141.3L801.1 139.9M801.1 139.9L800.5 138.4M800.5 138.4L800.0 137.0M800.0 137.0L799.4 135.5M799.4 135.5L798.8 134.1M798.8 134.1L798.2 132.6M798.2 132.6L797.6 131.2M797.6 131.2L796.9 129.8M796.9 129.8L796.3 128.4M796.3 128.4L795.6 127.0M795.6 127.0L794.9 125.5M794.9 125.5L794.2 124.1M794.2 124.1L793.5 122.7M793.5 122.7L792.8 121.3M792.8 121.3L792.0 120.0M792.0 120.0L791.3 118.6M791.3 118.6L790.5 117.2M790.5 117.2L789.7 115.8M789.7 115.8L788.9 114.5M788.9 114.5L788.1 113.1M788.1 113.1L787.2 111.8M787.2 111.8L786.4 110.4M786.4 110.4L785.5 109.1M785.5 109.1L784.6 107.7M784.6 107.7L783.7 106.4M783.7 106.4L782.8 105.1M782.8 105.1L781.9 103.8M781.9 103.8L781.0 102.5M781.0 102.5L780.0 101.2M780.0 101.2L779.1 99.9M779.1 99.9L778.1 98.6M778.1 98.6L777.1 97.3M777.1 97.3L776.1 96.1M776.1 96.1L775.1 94.8M775.1 94.8L774.1 93.5M774.1 93.5L773.0 92.3M773.0 92.3L772.0 91.1M772.0 91.1L770.9 89.8M770.9 89.8L769.8 88.6M769.8 88.6L768.7 87.4M768.7 87.4L767.6 86.2M767.6 86.2L766.5 85.0M766.5 85.0L765.4 83.8M765.4 83.8L764.2 82.6M764.2 82.6L763.0 81.4M763.0 81.4L761.9 80.3M761.9 80.3L760.7 79.1M760.7 79.1L759.5 78.0M759.5 78.0L758.3 76.8M758.3 76.8L758.3 75.7M758.3 75.7L758.3 74.5M758.3 74.5L758.3 73.4M758.3 73.4L758.2 72.2M758.2 72.2L758.2 71.1M758.2 71.1L758.1 70.0M758.1 70.0L758.1 68.8M758.1 68.8L758.0 67.7M758.0 67.7L757.9 66.6M757.9 66.6L757.8 65.5M757.8 65.5L757.7 64.5M757.7 64.5L757.5 63.4M757.5 63.4L757.4 62.3M757.4 62.3L757.2 61.3M757.2 61.3L757.1 60.2M757.1 60.2L756.9 59.2M756.9 59.2L756.7 58.2M756.7 58.2L756.5 57.1M756.5 57.1L756.2 56.1M756.2 56.1L756.0 55.1M756.0 55.1L755.8 54.1M755.8 54.1L755.5 53.1M755.5 53.1L755.2 52.2M755.2 52.2L755.0 51.2M755.0 51.2L754.7 50.2M754.7 50.2L754.3 49.3M754.3 49.3L754.0 48.4M754.0 48.4L753.7 47.4M753.7 47.4L753.3 46.5M753.3 46.5L753.0 45.6M753.0 45.6L752.6 44.7M752.6 44.7L752.2 43.8M752.2 43.8L751.8 43.0M751.8 43.0L751.4 42.1M751.4 42.1L751.0 41.2M751.0 41.2L750.6 40.4M750.6 40.4L750.1 39.6M750.1 39.6L749.6 38.7M749.6 38.7L749.2 37.9M749.2 37.9L748.7 37.1M748.7 37.1L748.2 36.3M748.2 36.3L747.7 35.5M747.7 35.5L747.2 34.8M747.2 34.8L746.6 34.0M746.6 34.0L746.1 33.3M746.1 33.3L745.5 32.5M745.5 32.5L744.9 31.8M744.9 31.8L744.4 31.1M744.4 31.1L743.8 30.4M743.8 30.4L743.1 29.7M743.1 29.7L742.5 29.0M742.5 29.0L741.9 28.4M741.9 28.4L741.3 27.7M741.3 27.7L740.6 27.1M740.6 27.1L739.9 26.4M432.5 341.0L433.1 341.6M433.1 341.6L433.8 342.2M433.8 342.2L434.5 342.9M434.5 342.9L435.2 343.5M435.2 343.5L435.9 344.1M435.9 344.1L436.6 344.6M436.6 344.6L437.3 345.2M437.3 345.2L438.0 345.8M438.0 345.8L438.8 346.3M438.8 346.3L439.5 346.9M439.5 346.9L440.3 347.4M440.3 347.4L441.1 347.9M441.1 347.9L441.9 348.4M441.9 348.4L442.7 348.9M442.7 348.9L443.5 349.3M443.5 349.3L444.3 349.8M444.3 349.8L445.1 350.2M445.1 350.2L446.0 350.7M446.0 350.7L446.8 351.1M446.8 351.1L447.7 351.5M447.7 351.5L448.6 351.9M448.6 351.9L449.5 352.3M449.5 352.3L450.3 352.6M450.3 352.6L451.2 353.0M451.2 353.0L452.2 353.3M452.2 353.3L453.1 353.7M453.1 353.7L454.0 354.0M454.0 354.0L455.0 354.3M455.0 354.3L455.9 354.6M455.9 354.6L456.9 354.9M456.9 354.9L457.8 355.1M457.8 355.1L458.8 355.4M458.8 355.4L459.8 355.6M459.8 355.6L460.8 355.9M460.8 355.9L461.8 356.1M461.8 356.1L462.8 356.3M462.8 356.3L463.8 356.5M463.8 356.5L464.9 356.6M464.9 356.6L465.9 356.8M465.9 356.8L467.0 357.0M467.0 357.0L468.0 357.1M468.0 357.1L469.1 357.2M469.1 357.2L470.2 357.3M470.2 357.3L471.3 357.4M471.3 357.4L472.4 357.5M472.4 357.5L473.5 357.6M473.5 357.6L474.6 357.7M474.6 357.7L475.7 357.7M475.7 357.7L476.8 357.7M476.8 357.7L477.9 357.8M477.9 357.8L479.1 357.8M479.1 357.8L480.2 357.8M480.2 357.8L481.4 357.8M481.4 357.8L482.5 357.7M482.5 357.7L483.7 357.7M483.7 357.7L484.9 357.6M484.9 357.6L486.1 357.6M486.1 357.6L487.3 357.5M487.3 357.5L488.4 357.4M488.4 357.4L489.7 357.3M489.7 357.3L490.9 357.2M490.9 357.2L492.1 357.1M492.1 357.1L493.3 356.9M493.3 356.9L494.5 356.8M494.5 356.8L495.8 356.6M495.8 356.6L497.0 356.4M497.0 356.4L498.3 356.2M498.3 356.2L499.5 356.0M499.5 356.0L500.8 355.8M500.8 355.8L502.0 355.6M502.0 355.6L503.3 355.3M503.3 355.3L504.6 355.1M504.6 355.1L505.9 354.8M505.9 354.8L507.2 354.5M507.2 354.5L508.5 354.2M508.5 354.2L509.8 353.9M509.8 353.9L511.1 353.6M511.1 353.6L512.4 353.3M512.4 353.3L513.7 353.0M513.7 353.0L515.0 352.6M515.0 352.6L516.3 352.2M516.3 352.2L517.7 351.9M517.7 351.9L519.0 351.5M519.0 351.5L520.3 351.1M520.3 351.1L521.7 350.7M521.7 350.7L523.0 350.3M523.0 350.3L524.4 349.8M524.4 349.8L525.7 349.4M525.7 349.4L527.1 348.9M527.1 348.9L528.5 348.4M528.5 348.4L529.8 348.0M529.8 348.0L531.2 347.5M531.2 347.5L532.6 347.0M532.6 347.0L533.9 346.4M533.9 346.4L535.3 345.9M535.3 345.9L536.7 345.4M536.7 345.4L538.1 344.8M538.1 344.8L539.5 344.3M539.5 344.3L540.9 343.7M540.9 343.7L542.3 343.1M542.3 343.1L543.7 342.5M543.7 342.5L545.1 341.9M545.1 341.9L546.5 341.3M546.5 341.3L547.9 340.7M547.9 340.7L549.3 340.0M549.3 340.0L550.7 339.4M550.7 339.4L552.1 338.7M552.1 338.7L553.5 338.0M553.5 338.0L555.0 337.4M555.0 337.4L556.4 336.7M556.4 336.7L557.8 336.0M557.8 336.0L559.2 335.2M559.2 335.2L560.7 334.5M560.7 334.5L562.1 333.8M562.1 333.8L563.5 333.0M563.5 333.0L564.9 332.3M564.9 332.3L566.4 331.5M566.4 331.5L567.8 330.7M567.8 330.7L569.2 329.9M569.2 329.9L570.7 329.2M570.7 329.2L572.1 328.3M572.1 328.3L573.6 327.5M573.6 327.5L575.0 326.7M575.0 326.7L576.4 325.9M576.4 325.9L577.9 325.0M577.9 325.0L579.3 324.2M579.3 324.2L580.7 323.3M580.7 323.3L582.2 322.4M582.2 322.4L583.6 321.5M583.6 321.5L585.1 320.6M585.1 320.6L586.5 319.7M586.5 319.7L587.9 318.8M587.9 318.8L589.4 317.9M589.4 317.9L590.8 317.0M590.8 317.0L592.3 316.0M592.3 316.0L593.7 315.1M593.7 315.1L595.1 314.1M595.1 314.1L596.6 313.1M596.6 313.1L598.0 312.1M598.0 312.1L599.4 311.2M599.4 311.2L600.9 310.2M600.9 310.2L602.3 309.2M602.3 309.2L603.7 308.1M603.7 308.1L605.2 307.1M605.2 307.1L606.6 306.1M606.6 306.1L608.0 305.1M608.0 305.1L609.4 304.0M609.4 304.0L610.9 303.0M610.9 303.0L612.3 301.9M612.3 301.9L613.7 300.8M613.7 300.8L615.1 299.7M615.1 299.7L616.5 298.7M616.5 298.7L617.9 297.6M617.9 297.6L619.3 296.5M619.3 296.5L620.8 295.3M620.8 295.3L622.2 294.2M622.2 294.2L623.6 293.1M623.6 293.1L625.0 292.0M625.0 292.0L626.4 290.8M626.4 290.8L627.7 289.7M627.7 289.7L629.1 288.5M629.1 288.5L630.5 287.4M630.5 287.4L631.9 286.2M631.9 286.2L633.3 285.0M633.3 285.0L634.7 283.8M634.7 283.8L636.0 282.6M636.0 282.6L637.4 281.4M637.4 281.4L638.8 280.2M638.8 280.2L640.1 279.0M640.1 279.0L641.5 277.8M641.5 277.8L642.9 276.6M642.9 276.6L644.2 275.3M644.2 275.3L645.6 274.1M645.6 274.1L646.9 272.9M646.9 272.9L648.2 271.6M648.2 271.6L649.6 270.4M649.6 270.4L650.9 269.1M650.9 269.1L652.2 267.8M652.2 267.8L653.6 266.6M653.6 266.6L654.9 265.3M654.9 265.3L656.2 264.0M656.2 264.0L657.5 262.7M657.5 262.7L658.8 261.4M658.8 261.4L660.1 260.1M660.1 260.1L661.4 258.8M661.4 258.8L662.7 257.5M662.7 257.5L664.0 256.2M664.0 256.2L665.2 254.8M665.2 254.8L666.5 253.5M666.5 253.5L667.8 252.2M667.8 252.2L669.0 250.9M669.0 250.9L670.3 249.5M670.3 249.5L671.5 248.2M671.5 248.2L672.8 246.8M672.8 246.8L674.0 245.5M674.0 245.5L675.2 244.1M675.2 244.1L676.5 242.7M676.5 242.7L677.7 241.4M677.7 241.4L678.9 240.0M678.9 240.0L680.1 238.6M680.1 238.6L681.3 237.3M681.3 237.3L682.5 235.9M682.5 235.9L683.7 234.5M683.7 234.5L684.9 233.1M684.9 233.1L686.0 231.7M686.0 231.7L687.2 230.3M687.2 230.3L688.4 228.9M688.4 228.9L689.5 227.5M689.5 227.5L690.7 226.1M690.7 226.1L691.8 224.7M691.8 224.7L692.9 223.3M692.9 223.3L694.0 221.9M694.0 221.9L695.2 220.4M695.2 220.4L696.3 219.0M696.3 219.0L697.4 217.6M697.4 217.6L698.5 216.2M698.5 216.2L699.5 214.7M699.5 214.7L700.6 213.3M700.6 213.3L701.7 211.9M701.7 211.9L702.8 210.4M702.8 210.4L703.8 209.0M703.8 209.0L704.9 207.6M704.9 207.6L705.9 206.1M705.9 206.1L706.9 204.7M706.9 204.7L707.9 203.2M707.9 203.2L709.0 201.8M709.0 201.8L710.0 200.4M710.0 200.4L711.0 198.9M711.0 198.9L711.9 197.5M711.9 197.5L712.9 196.0M712.9 196.0L713.9 194.6M713.9 194.6L714.8 193.1M714.8 193.1L715.8 191.7M715.8 191.7L716.7 190.2M716.7 190.2L717.7 188.8M717.7 188.8L718.6 187.3M718.6 187.3L719.5 185.8M719.5 185.8L720.4 184.4M720.4 184.4L721.3 182.9M721.3 182.9L722.2 181.5M722.2 181.5L723.1 180.0M723.1 180.0L724.0 178.6M724.0 178.6L724.8 177.1M724.8 177.1L725.7 175.7M725.7 175.7L726.5 174.2M726.5 174.2L727.3 172.7M727.3 172.7L728.2 171.3M728.2 171.3L729.0 169.8M729.0 169.8L729.8 168.4M729.8 168.4L730.6 166.9M730.6 166.9L731.3 165.5M731.3 165.5L732.1 164.0M732.1 164.0L732.9 162.6M732.9 162.6L733.6 161.1M733.6 161.1L734.4 159.7M734.4 159.7L735.1 158.2M735.1 158.2L735.8 156.8M735.8 156.8L736.5 155.4M736.5 155.4L737.2 153.9M737.2 153.9L737.9 152.5M737.9 152.5L738.6 151.1M738.6 151.1L739.3 149.6M739.3 149.6L739.9 148.2M739.9 148.2L740.6 146.8M740.6 146.8L741.2 145.3M741.2 145.3L741.8 143.9M741.8 143.9L742.4 142.5M742.4 142.5L743.0 141.1M743.0 141.1L743.6 139.6M743.6 139.6L744.2 138.2M744.2 138.2L744.8 136.8M744.8 136.8L745.3 135.4M745.3 135.4L745.9 134.0M745.9 134.0L746.4 132.6M746.4 132.6L746.9 131.2M746.9 131.2L747.5 129.8M747.5 129.8L748.0 128.4M748.0 128.4L748.4 127.0M748.4 127.0L748.9 125.7M748.9 125.7L749.4 124.3M749.4 124.3L749.8 122.9M749.8 122.9L750.3 121.5M750.3 121.5L750.7 120.2M750.7 120.2L751.1 118.8M751.1 118.8L751.6 117.4M751.6 117.4L752.0 116.1M752.0 116.1L752.3 114.7M752.3 114.7L752.7 113.4M752.7 113.4L753.1 112.0M753.1 112.0L753.4 110.7M753.4 110.7L753.8 109.4M753.8 109.4L754.1 108.1M754.1 108.1L754.4 106.7M754.4 106.7L754.7 105.4M754.7 105.4L755.0 104.1M755.0 104.1L755.3 102.8M755.3 102.8L755.5 101.5M755.5 101.5L755.8 100.2M755.8 100.2L756.0 98.9M756.0 98.9L756.3 97.6M756.3 97.6L756.5 96.4M756.5 96.4L756.7 95.1M756.7 95.1L756.9 93.8M756.9 93.8L757.1 92.6M757.1 92.6L757.2 91.3M757.2 91.3L757.4 90.1M757.4 90.1L757.5 88.8M757.5 88.8L757.7 87.6M757.7 87.6L757.8 86.4M757.8 86.4L757.9 85.2M757.9 85.2L758.0 83.9M758.0 83.9L758.1 82.7M758.1 82.7L758.1 81.5M758.1 81.5L758.2 80.3M758.2 80.3L758.2 79.2M758.2 79.2L758.3 78.0M758.3 78.0L758.3 76.8M455.6 55.5L455.5 54.4M455.5 54.4L455.5 53.2M455.5 53.2L455.4 52.1M455.4 52.1L455.4 50.9M455.4 50.9L455.3 49.8M455.3 49.8L455.3 48.7M455.3 48.7L455.3 47.6M455.3 47.6L455.2 46.5M455.2 46.5L455.2 45.4M455.2 45.4L455.2 44.3M455.2 44.3L455.3 43.3M455.3 43.3L455.3 42.2M455.3 42.2L455.3 41.2M455.3 41.2L455.4 40.1M455.4 40.1L455.4 39.1M455.4 39.1L455.5 38.1M455.5 38.1L455.6 37.1M455.6 37.1L455.6 36.1M455.6 36.1L455.7 35.1M455.7 35.1L455.8 34.1M455.8 34.1L456.0 33.2M456.0 33.2L456.1 32.2M456.1 32.2L456.2 31.3M456.2 31.3L456.4 30.3M456.4 30.3L456.5 29.4M456.5 29.4L456.7 28.5M456.7 28.5L456.9 27.6M456.9 27.6L457.1 26.7M457.1 26.7L457.3 25.9M457.3 25.9L457.5 25.0M457.5 25.0L457.7 24.2M457.7 24.2L457.9 23.3M457.9 23.3L458.2 22.5M458.2 22.5L458.4 21.7M458.4 21.7L458.7 20.9M458.7 20.9L458.9 20.1M458.9 20.1L459.2 19.3M459.2 19.3L459.5 18.5M459.5 18.5L459.8 17.8M459.8 17.8L460.1 17.0M460.1 17.0L460.4 16.3M460.4 16.3L460.8 15.6M460.8 15.6L461.1 14.9M461.1 14.9L461.4 14.2M461.4 14.2L461.8 13.5M461.8 13.5L462.2 12.8M462.2 12.8L462.6 12.2M462.6 12.2L462.9 11.5M462.9 11.5L463.3 10.9M463.3 10.9L463.7 10.3M463.7 10.3L464.2 9.7M464.2 9.7L464.6 9.1M464.6 9.1L465.0 8.5M465.0 8.5L465.5 8.0M465.5 8.0L465.9 7.4M465.9 7.4L466.4 6.9M466.4 6.9L466.9 6.3M466.9 6.3L467.4 5.8M467.4 5.8L467.9 5.3M467.9 5.3L468.4 4.9M468.4 4.9L468.9 4.4M468.9 4.4L469.4 3.9M469.4 3.9L470.0 3.5M470.0 3.5L470.5 3.0M470.5 3.0L471.1 2.6M471.1 2.6L471.6 2.2M471.6 2.2L472.2 1.8M472.2 1.8L472.8 1.5M714.4 369.1L713.9 369.4M713.9 369.4L713.3 369.8M713.3 369.8L712.7 370.2M712.7 370.2L712.1 370.5M712.1 370.5L711.4 370.8M711.4 370.8L710.8 371.1M710.8 371.1L710.2 371.4M710.2 371.4L709.5 371.7M709.5 371.7L708.9 372.0M708.9 372.0L708.2 372.2M708.2 372.2L707.6 372.5M707.6 372.5L706.9 372.7M706.9 372.7L706.2 372.9M706.2 372.9L705.5 373.1M705.5 373.1L704.8 373.3M704.8 373.3L704.1 373.5M704.1 373.5L703.4 373.6M703.4 373.6L702.7 373.7M702.7 373.7L701.9 373.9M701.9 373.9L701.2 374.0M701.2 374.0L700.4 374.1M700.4 374.1L699.7 374.2M699.7 374.2L698.9 374.2M698.9 374.2L698.2 374.3M698.2 374.3L697.4 374.3M697.4 374.3L696.6 374.3M696.6 374.3L695.8 374.4M695.8 374.4L695.0 374.4M695.0 374.4L694.2 374.3M694.2 374.3L693.4 374.3M693.4 374.3L692.6 374.3M692.6 374.3L691.7 374.2M691.7 374.2L690.9 374.1M690.9 374.1L690.0 374.0M690.0 374.0L689.2 373.9M689.2 373.9L688.3 373.8M688.3 373.8L687.5 373.7M687.5 373.7L686.6 373.6M686.6 373.6L685.7 373.4M685.7 373.4L684.8 373.2M684.8 373.2L683.9 373.0M683.9 373.0L683.0 372.8M683.0 372.8L682.1 372.6M682.1 372.6L681.2 372.4M681.2 372.4L680.3 372.2M680.3 372.2L679.4 371.9M679.4 371.9L678.5 371.7M678.5 371.7L677.5 371.4M677.5 371.4L676.6 371.1M676.6 371.1L675.7 370.8M675.7 370.8L674.7 370.4M674.7 370.4L673.7 370.1M673.7 370.1L672.8 369.8M672.8 369.8L671.8 369.4M671.8 369.4L670.8 369.0M670.8 369.0L669.9 368.6M669.9 368.6L668.9 368.2M668.9 368.2L667.9 367.8M667.9 367.8L666.9 367.4M666.9 367.4L665.9 367.0M665.9 367.0L664.9 366.5M664.9 366.5L663.9 366.0M663.9 366.0L662.9 365.6M662.9 365.6L661.9 365.1M661.9 365.1L660.8 364.6M660.8 364.6L659.8 364.0M659.8 364.0L658.8 363.5M658.8 363.5L657.7 363.0M657.7 363.0L656.7 362.4M656.7 362.4L655.7 361.8M655.7 361.8L654.6 361.3M654.6 361.3L653.6 360.7M653.6 360.7L652.5 360.1M652.5 360.1L651.4 359.4M651.4 359.4L650.4 358.8M650.4 358.8L649.3 358.2M649.3 358.2L648.2 357.5M648.2 357.5L647.2 356.9M647.2 356.9L646.1 356.2M646.1 356.2L645.0 355.5M645.0 355.5L643.9 354.8M643.9 354.8L642.8 354.1M642.8 354.1L641.7 353.3M641.7 353.3L640.6 352.6M640.6 352.6L639.5 351.8M639.5 351.8L638.4 351.1M638.4 351.1L637.3 350.3M637.3 350.3L636.2 349.5M636.2 349.5L635.1 348.7M635.1 348.7L634.0 347.9M634.0 347.9L632.9 347.1M632.9 347.1L631.8 346.3M631.8 346.3L630.6 345.4M630.6 345.4L629.5 344.6M629.5 344.6L628.4 343.7M628.4 343.7L627.3 342.8M627.3 342.8L626.1 341.9M626.1 341.9L625.0 341.0M625.0 341.0L623.9 340.1M623.9 340.1L622.7 339.2M622.7 339.2L621.6 338.3M621.6 338.3L620.5 337.3M620.5 337.3L619.3 336.4M619.3 336.4L618.2 335.4M618.2 335.4L617.0 334.4M617.0 334.4L615.9 333.5M615.9 333.5L614.7 332.5M614.7 332.5L613.6 331.5M613.6 331.5L612.4 330.5M612.4 330.5L611.3 329.4M611.3 329.4L610.1 328.4M610.1 328.4L609.0 327.4M609.0 327.4L607.8 326.3M607.8 326.3L606.7 325.2M606.7 325.2L605.5 324.2M605.5 324.2L604.4 323.1M604.4 323.1L603.2 322.0M603.2 322.0L602.1 320.9M602.1 320.9L600.9 319.8M600.9 319.8L599.8 318.7M599.8 318.7L598.6 317.5M598.6 317.5L597.4 316.4M597.4 316.4L596.3 315.3M596.3 315.3L595.1 314.1M595.1 314.1L594.0 312.9M594.0 312.9L592.8 311.8M592.8 311.8L591.7 310.6M591.7 310.6L590.5 309.4M590.5 309.4L589.3 308.2M589.3 308.2L588.2 307.0M588.2 307.0L587.0 305.8M587.0 305.8L585.9 304.5M585.9 304.5L584.7 303.3M584.7 303.3L583.6 302.1M583.6 302.1L582.4 300.8M582.4 300.8L581.3 299.6M581.3 299.6L580.1 298.3M580.1 298.3L579.0 297.0M579.0 297.0L577.8 295.8M577.8 295.8L576.7 294.5M576.7 294.5L575.5 293.2M575.5 293.2L574.4 291.9M574.4 291.9L573.3 290.6M573.3 290.6L572.1 289.3M572.1 289.3L571.0 287.9M571.0 287.9L569.8 286.6M569.8 286.6L568.7 285.3M568.7 285.3L567.6 283.9M567.6 283.9L566.4 282.6M566.4 282.6L565.3 281.2M565.3 281.2L564.2 279.9M564.2 279.9L563.1 278.5M563.1 278.5L561.9 277.1M561.9 277.1L560.8 275.7M560.8 275.7L559.7 274.3M559.7 274.3L558.6 273.0M558.6 273.0L557.5 271.6M557.5 271.6L556.4 270.1M556.4 270.1L555.2 268.7M555.2 268.7L554.1 267.3M554.1 267.3L553.0 265.9M553.0 265.9L551.9 264.5M551.9 264.5L550.8 263.0M550.8 263.0L549.8 261.6M549.8 261.6L548.7 260.2M548.7 260.2L547.6 258.7M547.6 258.7L546.5 257.3M546.5 257.3L545.4 255.8M545.4 255.8L544.3 254.3M544.3 254.3L543.3 252.9M543.3 252.9L542.2 251.4M542.2 251.4L541.1 249.9M541.1 249.9L540.1 248.4M540.1 248.4L539.0 246.9M539.0 246.9L537.9 245.5M537.9 245.5L536.9 244.0M536.9 244.0L535.8 242.5M535.8 242.5L534.8 241.0M534.8 241.0L533.8 239.5M533.8 239.5L532.7 237.9M532.7 237.9L531.7 236.4M531.7 236.4L530.7 234.9M530.7 234.9L529.6 233.4M529.6 233.4L528.6 231.9M528.6 231.9L527.6 230.3M527.6 230.3L526.6 228.8M526.6 228.8L525.6 227.3M525.6 227.3L524.6 225.7M524.6 225.7L523.6 224.2M523.6 224.2L522.6 222.7M522.6 222.7L521.6 221.1M521.6 221.1L520.6 219.6M520.6 219.6L519.7 218.0M519.7 218.0L518.7 216.5M518.7 216.5L517.7 214.9M517.7 214.9L516.8 213.4M516.8 213.4L515.8 211.8M515.8 211.8L514.9 210.2M514.9 210.2L513.9 208.7M513.9 208.7L513.0 207.1M513.0 207.1L512.1 205.6M512.1 205.6L511.1 204.0M511.1 204.0L510.2 202.4M510.2 202.4L509.3 200.9M509.3 200.9L508.4 199.3M508.4 199.3L507.5 197.7M507.5 197.7L506.6 196.1M506.6 196.1L505.7 194.6M505.7 194.6L504.8 193.0M504.8 193.0L503.9 191.4M503.9 191.4L503.0 189.8M503.0 189.8L502.2 188.3M502.2 188.3L501.3 186.7M501.3 186.7L500.5 185.1M500.5 185.1L499.6 183.5M499.6 183.5L498.8 182.0M498.8 182.0L497.9 180.4M497.9 180.4L497.1 178.8M497.1 178.8L496.3 177.2M496.3 177.2L495.5 175.7M495.5 175.7L494.7 174.1M494.7 174.1L493.9 172.5M493.9 172.5L493.1 171.0M493.1 171.0L492.3 169.4M492.3 169.4L491.5 167.8M491.5 167.8L490.7 166.2M490.7 166.2L489.9 164.7M489.9 164.7L489.2 163.1M489.2 163.1L488.4 161.5M488.4 161.5L487.7 160.0M487.7 160.0L486.9 158.4M486.9 158.4L486.2 156.8M486.2 156.8L485.5 155.3M485.5 155.3L484.8 153.7M484.8 153.7L484.1 152.2M484.1 152.2L483.4 150.6M483.4 150.6L482.7 149.1M482.7 149.1L482.0 147.5M482.0 147.5L481.3 146.0M481.3 146.0L480.6 144.4M480.6 144.4L480.0 142.9M480.0 142.9L479.3 141.3M479.3 141.3L478.7 139.8M478.7 139.8L478.0 138.3M478.0 138.3L477.4 136.7M477.4 136.7L476.8 135.2M476.8 135.2L476.1 133.7M476.1 133.7L475.5 132.2M475.5 132.2L474.9 130.7M474.9 130.7L474.3 129.1M474.3 129.1L473.8 127.6M473.8 127.6L473.2 126.1M473.2 126.1L472.6 124.6M472.6 124.6L472.1 123.1M472.1 123.1L471.5 121.6M471.5 121.6L471.0 120.1M471.0 120.1L470.4 118.7M470.4 118.7L469.9 117.2M469.9 117.2L469.4 115.7M469.4 115.7L468.9 114.2M468.9 114.2L468.4 112.8M468.4 112.8L467.9 111.3M467.9 111.3L467.4 109.8M467.4 109.8L466.9 108.4M466.9 108.4L466.5 106.9M466.5 106.9L466.0 105.5M466.0 105.5L465.6 104.1M465.6 104.1L465.1 102.6M465.1 102.6L464.7 101.2M464.7 101.2L464.3 99.8M464.3 99.8L463.9 98.4M463.9 98.4L463.5 97.0M463.5 97.0L463.1 95.6M463.1 95.6L462.7 94.2M462.7 94.2L462.3 92.8M462.3 92.8L462.0 91.4M462.0 91.4L461.6 90.0M461.6 90.0L461.3 88.6M461.3 88.6L460.9 87.3M460.9 87.3L460.6 85.9M460.6 85.9L460.3 84.6M460.3 84.6L460.0 83.2M460.0 83.2L459.7 81.9M459.7 81.9L459.4 80.5M459.4 80.5L459.1 79.2M459.1 79.2L458.8 77.9M458.8 77.9L458.6 76.6M458.6 76.6L458.3 75.3M458.3 75.3L458.1 74.0M458.1 74.0L457.9 72.7M457.9 72.7L457.6 71.4M457.6 71.4L457.4 70.1M457.4 70.1L457.2 68.9M457.2 68.9L457.0 67.6M457.0 67.6L456.8 66.4M456.8 66.4L456.7 65.1M456.7 65.1L456.5 63.9M456.5 63.9L456.4 62.7M456.4 62.7L456.2 61.5M456.2 61.5L456.1 60.3M456.1 60.3L455.9 59.1M455.9 59.1L455.8 57.9M455.8 57.9L455.7 56.7M455.7 56.7L455.6 55.5" stroke="#7a7a7a" stroke-width="1.5" fill="none"/>
<path d="M575.1 233.9L580.8 230.1M575.1 233.9L570.7 229.5M580.8 230.1L570.7 229.5M570.7 229.5L574.6 226.8M570.7 229.5L566.2 225.1M570.7 229.5L570.9 220.5M566.2 225.1L570.9 220.5M566.2 225.1L561.8 220.7M570.9 220.5L561.8 220.7M561.8 220.7L568.0 216.6M561.8 220.7L557.4 216.4M561.8 220.7L563.7 213.1M557.4 216.4L563.7 213.1M557.4 216.4L553.0 212.0M563.7 213.1L553.0 212.0M553.0 212.0L557.6 210.1M553.0 212.0L548.6 207.6M553.0 212.0L555.7 204.0M548.6 207.6L555.7 204.0M548.6 207.6L544.2 203.3M555.7 204.0L544.2 203.3M544.2 203.3L550.6 200.9M544.2 203.3L539.9 198.9M544.2 203.3L547.6 195.1M539.9 198.9L547.6 195.1M539.9 198.9L535.5 194.6M547.6 195.1L535.5 194.6M535.5 194.6L539.5 190.6M535.5 194.6L531.1 190.3M535.5 194.6L536.9 186.5M531.1 190.3L536.9 186.5M580.8 230.1L586.5 226.3M580.8 230.1L574.6 226.8M580.8 230.1L580.5 222.8M574.6 226.8L580.5 222.8M574.6 226.8L570.9 220.5M580.5 222.8L570.9 220.5M570.9 220.5L576.9 216.7M570.9 220.5L568.0 216.6M570.9 220.5L572.6 213.3M568.0 216.6L572.6 213.3M568.0 216.6L563.7 213.1M572.6 213.3L563.7 213.1M563.7 213.1L567.5 210.1M563.7 213.1L557.6 210.1M563.7 213.1L564.6 205.6M557.6 210.1L564.6 205.6M557.6 210.1L555.7 204.0M564.6 205.6L555.7 204.0M555.7 204.0L561.5 199.6M555.7 204.0L550.6 200.9M555.7 204.0L557.3 194.4M550.6 200.9L557.3 194.4M550.6 200.9L547.6 195.1M557.3 194.4L547.6 195.1M547.6 195.1L551.4 190.9M547.6 195.1L539.5 190.6M547.6 195.1L548.4 187.4M539.5 190.6L548.4 187.4M539.5 190.6L536.9 186.5M548.4 187.4L536.9 186.5M536.9 186.5L542.6 182.8M586.5 226.3L592.3 222.5M586.5 226.3L580.5 222.8M592.3 222.5L580.5 222.8M580.5 222.8L590.2 217.6M580.5 222.8L576.9 216.7M580.5 222.8L584.5 213.8M576.9 216.7L584.5 213.8M576.9 216.7L572.6 213.3M584.5 213.8L572.6 213.3M572.6 213.3L580.0 208.1M572.6 213.3L567.5 210.1M572.6 213.3L572.5 205.2M567.5 210.1L572.5 205.2M567.5 210.1L564.6 205.6M572.5 205.2L564.6 205.6M564.6 205.6L571.0 198.7M564.6 205.6L561.5 199.6M564.6 205.6L566.8 196.9M561.5 199.6L566.8 196.9M561.5 199.6L557.3 194.4M566.8 196.9L557.3 194.4M557.3 194.4L559.3 191.8M557.3 194.4L551.4 190.9M557.3 194.4L557.9 188.2M551.4 190.9L557.9 188.2M551.4 190.9L548.4 187.4M557.9 188.2L548.4 187.4M548.4 187.4L553.8 182.1M548.4 187.4L542.6 182.8M548.4 187.4L548.3 179.1M542.6 182.8L548.3 179.1M592.3 222.5L598.0 218.7M592.3 222.5L590.2 217.6M592.3 222.5L591.0 214.6M590.2 217.6L591.0 214.6M590.2 217.6L584.5 213.8M591.0 214.6L584.5 213.8M584.5 213.8L588.9 209.9M584.5 213.8L580.0 208.1M584.5 213.8L583.5 205.5M580.0 208.1L583.5 205.5M580.0 208.1L572.5 205.2M583.5 205.5L572.5 205.2M572.5 205.2L578.8 202.7M572.5 205.2L571.0 198.7M572.5 205.2L575.0 198.9M571.0 198.7L575.0 198.9M571.0 198.7L566.8 196.9M575.0 198.9L566.8 196.9M566.8 196.9L572.9 191.1M566.8 196.9L559.3 191.8M566.8 196.9L566.8 188.4M559.3 191.8L566.8 188.4M559.3 191.8L557.9 188.2M566.8 188.4L557.9 188.2M557.9 188.2L564.4 183.4M557.9 188.2L553.8 182.1M557.9 188.2L558.3 179.0M553.8 182.1L558.3 179.0M553.8 182.1L548.3 179.1M558.3 179.0L548.3 179.1M548.3 179.1L554.0 175.3M598.0 218.7L603.7 214.9M598.0 218.7L591.0 214.6M603.7 214.9L591.0 214.6M591.0 214.6L597.0 210.5M591.0 214.6L588.9 209.9M591.0 214.6L592.4 206.9M588.9 209.9L592.4 206.9M588.9 209.9L583.5 205.5M592.4 206.9L583.5 205.5M583.5 205.5L592.4 201.9M583.5 205.5L578.8 202.7M583.5 205.5L585.0 197.0M578.8 202.7L585.0 197.0M578.8 202.7L575.0 198.9M585.0 197.0L575.0 198.9M575.0 198.9L579.5 194.1M575.0 198.9L572.9 191.1M575.0 198.9L578.3 188.1M572.9 191.1L578.3 188.1M572.9 191.1L566.8 188.4M578.3 188.1L566.8 188.4M566.8 188.4L574.2 184.6M566.8 188.4L564.4 183.4M566.8 188.4L567.6 181.2M564.4 183.4L567.6 181.2M564.4 183.4L558.3 179.0M567.6 181.2L558.3 179.0M558.3 179.0L563.2 177.0M558.3 179.0L554.0 175.3M558.3 179.0L559.7 171.6M554.0 175.3L559.7 171.6M603.7 214.9L609.4 211.1M603.7 214.9L597.0 210.5M603.7 214.9L606.8 205.8M597.0 210.5L606.8 205.8M597.0 210.5L592.4 206.9M606.8 205.8L592.4 206.9M592.4 206.9L602.3 201.2M592.4 206.9L592.4 201.9M592.4 206.9L595.3 197.2M592.4 201.9L595.3 197.2M592.4 201.9L585.0 197.0M595.3 197.2L585.0 197.0M585.0 197.0L592.4 193.0M585.0 197.0L579.5 194.1M585.0 197.0L586.2 188.8M579.5 194.1L586.2 188.8M579.5 194.1L578.3 188.1M586.2 188.8L578.3 188.1M578.3 188.1L581.6 184.4M578.3 188.1L574.2 184.6M578.3 188.1L577.1 182.0M574.2 184.6L577.1 182.0M574.2 184.6L567.6 181.2M577.1 182.0L567.6 181.2M567.6 181.2L573.2 175.5M567.6 181.2L563.2 177.0M567.6 181.2L568.1 172.1M563.2 177.0L568.1 172.1M563.2 177.0L559.7 171.6M568.1 172.1L559.7 171.6M559.7 171.6L565.3 167.9M609.4 211.1L615.1 207.4M609.4 211.1L606.8 205.8M615.1 207.4L606.8 205.8M606.8 205.8L610.3 203.7M606.8 205.8L602.3 201.2M606.8 205.8L606.1 200.4M602.3 201.2L606.1 200.4M602.3 201.2L595.3 197.2M606.1 200.4L595.3 197.2M595.3 197.2L599.8 194.1M595.3 197.2L592.4 193.0M595.3 197.2L599.5 190.0M592.4 193.0L599.5 190.0M592.4 193.0L586.2 188.8M599.5 190.0L586.2 188.8M586.2 188.8L593.4 185.5M586.2 188.8L581.6 184.4M586.2 188.8L588.6 180.8M581.6 184.4L588.6 180.8M581.6 184.4L577.1 182.0M588.6 180.8L577.1 182.0M577.1 182.0L582.5 176.5M577.1 182.0L573.2 175.5M577.1 182.0L579.4 172.5M573.2 175.5L579.4 172.5M573.2 175.5L568.1 172.1M579.4 172.5L568.1 172.1M568.1 172.1L576.6 168.8M568.1 172.1L565.3 167.9M568.1 172.1L571.0 164.1M565.3 167.9L571.0 164.1M615.1 207.4L620.8 203.6M615.1 207.4L610.3 203.7M615.1 207.4L618.1 199.5M610.3 203.7L618.1 199.5M610.3 203.7L606.1 200.4M618.1 199.5L606.1 200.4M606.1 200.4L612.8 193.3M606.1 200.4L599.8 194.1M606.1 200.4L608.8 189.6M599.8 194.1L608.8 189.6M599.8 194.1L599.5 190.0M608.8 189.6L599.5 190.0M599.5 190.0L605.6 186.2M599.5 190.0L593.4 185.5M599.5 190.0L598.0 184.1M593.4 185.5L598.0 184.1M593.4 185.5L588.6 180.8M598.0 184.1L588.6 180.8M588.6 180.8L593.9 178.8M588.6 180.8L582.5 176.5M588.6 180.8L588.6 173.9M582.5 176.5L588.6 173.9M582.5 176.5L579.4 172.5M588.6 173.9L579.4 172.5M579.4 172.5L583.6 169.9M579.4 172.5L576.6 168.8M579.4 172.5L579.5 165.1M576.6 168.8L579.5 165.1M576.6 168.8L571.0 164.1M579.5 165.1L571.0 164.1M571.0 164.1L576.7 160.4M620.8 203.6L626.5 199.8M620.8 203.6L618.1 199.5M626.5 199.8L618.1 199.5M618.1 199.5L622.8 194.4M618.1 199.5L612.8 193.3M618.1 199.5L618.7 191.6M612.8 193.3L618.7 191.6M612.8 193.3L608.8 189.6M618.7 191.6L608.8 189.6M608.8 189.6L614.5 187.7M608.8 189.6L605.6 186.2M608.8 189.6L608.8 180.8M605.6 186.2L608.8 180.8M605.6 186.2L598.0 184.1M608.8 180.8L598.0 184.1M598.0 184.1L606.6 178.3M598.0 184.1L593.9 178.8M598.0 184.1L599.7 174.7M593.9 178.8L599.7 174.7M593.9 178.8L588.6 173.9M599.7 174.7L588.6 173.9M588.6 173.9L593.8 170.3M588.6 173.9L583.6 169.9M588.6 173.9L592.6 165.0M583.6 169.9L592.6 165.0M583.6 169.9L579.5 165.1M592.6 165.0L579.5 165.1M579.5 165.1L587.4 159.5M579.5 165.1L576.7 160.4M579.5 165.1L582.4 156.7M576.7 160.4L582.4 156.7M626.5 199.8L632.1 196.1M626.5 199.8L622.8 194.4M626.5 199.8L627.7 191.3M622.8 194.4L627.7 191.3M622.8 194.4L618.7 191.6M627.7 191.3L618.7 191.6M618.7 191.6L624.6 188.0M618.7 191.6L614.5 187.7M618.7 191.6L619.1 182.4M614.5 187.7L619.1 182.4M614.5 187.7L608.8 180.8M619.1 182.4L608.8 180.8M608.8 180.8L614.9 177.3M608.8 180.8L606.6 178.3M608.8 180.8L608.9 174.4M606.6 178.3L608.9 174.4M606.6 178.3L599.7 174.7M608.9 174.4L599.7 174.7M599.7 174.7L606.1 168.4M599.7 174.7L593.8 170.3M599.7 174.7L601.0 167.7M593.8 170.3L601.0 167.7M593.8 170.3L592.6 165.0M601.0 167.7L592.6 165.0M592.6 165.0L598.0 161.8M592.6 165.0L587.4 159.5M592.6 165.0L591.7 156.2M587.4 159.5L591.7 156.2M587.4 159.5L582.4 156.7M591.7 156.2L582.4 156.7M582.4 156.7L588.0 153.0M632.1 196.1L637.8 192.3M632.1 196.1L627.7 191.3M637.8 192.3L627.7 191.3M627.7 191.3L632.2 189.2M627.7 191.3L624.6 188.0M627.7 191.3L627.2 184.2M624.6 188.0L627.2 184.2M624.6 188.0L619.1 182.4M627.2 184.2L619.1 182.4M619.1 182.4L626.0 178.8M619.1 182.4L614.9 177.3M619.1 182.4L619.5 175.3M614.9 177.3L619.5 175.3M614.9 177.3L608.9 174.4M619.5 175.3L608.9 174.4M608.9 174.4L615.2 172.0M608.9 174.4L606.1 168.4M608.9 174.4L610.7 166.9M606.1 168.4L610.7 166.9M606.1 168.4L601.0 167.7M610.7 166.9L601.0 167.7M601.0 167.7L604.8 162.6M601.0 167.7L598.0 161.8M601.0 167.7L603.2 158.1M598.0 161.8L603.2 158.1M598.0 161.8L591.7 156.2M603.2 158.1L591.7 156.2M591.7 156.2L595.9 154.0M591.7 156.2L588.0 153.0M591.7 156.2L593.7 149.3M588.0 153.0L593.7 149.3M637.8 192.3L643.5 188.6M637.8 192.3L632.2 189.2M637.8 192.3L641.0 183.8M632.2 189.2L641.0 183.8M632.2 189.2L627.2 184.2M641.0 183.8L627.2 184.2M627.2 184.2L633.1 179.7M627.2 184.2L626.0 178.8M627.2 184.2L631.3 176.0M626.0 178.8L631.3 176.0M626.0 178.8L619.5 175.3M631.3 176.0L619.5 175.3M619.5 175.3L624.6 170.6M619.5 175.3L615.2 172.0M619.5 175.3L620.4 166.9M615.2 172.0L620.4 166.9M615.2 172.0L610.7 166.9M620.4 166.9L610.7 166.9M610.7 166.9L614.9 163.2M610.7 166.9L604.8 162.6M610.7 166.9L612.8 157.1M604.8 162.6L612.8 157.1M604.8 162.6L603.2 158.1M612.8 157.1L603.2 158.1M603.2 158.1L609.0 154.0M603.2 158.1L595.9 154.0M603.2 158.1L602.1 150.9M595.9 154.0L602.1 150.9M595.9 154.0L593.7 149.3M602.1 150.9L593.7 149.3M593.7 149.3L599.3 145.6M643.5 188.6L649.1 184.8M643.5 188.6L641.0 183.8M649.1 184.8L641.0 183.8M641.0 183.8L644.7 180.5M641.0 183.8L633.1 179.7M641.0 183.8L640.2 176.2M633.1 179.7L640.2 176.2M633.1 179.7L631.3 176.0M640.2 176.2L631.3 176.0M631.3 176.0L635.8 171.9M631.3 176.0L624.6 170.6M631.3 176.0L631.4 167.6M624.6 170.6L631.4 167.6M624.6 170.6L620.4 166.9M631.4 167.6L620.4 166.9M620.4 166.9L627.0 163.3M620.4 166.9L614.9 163.2M620.4 166.9L622.5 159.0M614.9 163.2L622.5 159.0M614.9 163.2L612.8 157.1M622.5 159.0L612.8 157.1M612.8 157.1L618.1 154.7M612.8 157.1L609.0 154.0M612.8 157.1L613.7 150.5M609.0 154.0L613.7 150.5M609.0 154.0L602.1 150.9M613.7 150.5L602.1 150.9M602.1 150.9L609.3 146.2M602.1 150.9L599.3 145.6M602.1 150.9L605.0 141.9M599.3 145.6L605.0 141.9M649.1 184.8L644.7 180.5M644.7 180.5L640.2 176.2M640.2 176.2L635.8 171.9M635.8 171.9L631.4 167.6M631.4 167.6L627.0 163.3M627.0 163.3L622.5 159.0M622.5 159.0L618.1 154.7M618.1 154.7L613.7 150.5M613.7 150.5L609.3 146.2M609.3 146.2L605.0 141.9" stroke="#737373" stroke-width="1.25" fill="none"/>
<path d="M575.1 233.9L649.1 184.8L605.0 141.9L531.1 190.3Z" stroke="#737373" stroke-width="3.5" fill="none" stroke-linejoin="round"/><circle cx="575.1" cy="233.9" r="3" fill="#6f6f6f"/><circle cx="649.1" cy="184.8" r="3" fill="#6f6f6f"/><circle cx="605.0" cy="141.9" r="3" fill="#6f6f6f"/><circle cx="531.1" cy="190.3" r="3" fill="#6f6f6f"/>
<path d="M728.3 348.3L720.2 363.9M728.3 348.3L695.7 372.1M720.2 363.9L695.7 372.1M720.2 363.9L747.6 339.3M728.3 348.3L747.6 339.3M494.5 383.1L467.2 369.9M498.6 387.3L467.2 369.9M498.6 387.3L494.5 383.1M707.2 372.6L681.6 387.0M720.2 363.9L707.2 372.6M720.2 363.9L681.6 387.0M695.7 372.1L681.6 387.0M421.6 325.1L433.8 342.2M421.6 325.1L415.4 318.4M433.8 342.2L415.4 318.4M433.8 342.2L467.2 369.9M483.5 283.9L460.0 309.1M483.5 283.9L445.5 272.8M460.0 309.1L445.5 272.8M489.6 242.2L522.3 270.2M483.5 283.9L489.6 242.2M483.5 283.9L522.3 270.2M575.0 212.3L530.8 185.7M573.0 157.2L575.0 212.3M573.0 157.2L530.8 185.7M455.8 245.3L445.5 272.8M483.5 283.9L455.8 245.3M489.6 242.2L455.8 245.3M415.4 318.4L392.2 283.6M421.6 325.1L392.2 283.6M392.2 283.6L380.1 249.2M728.5 297.9L695.6 328.8M731.2 326.0L695.6 328.8M731.2 326.0L728.5 297.9M694.6 346.3L731.2 326.0M694.6 346.3L695.6 328.8M694.6 346.3L728.3 348.3M731.2 326.0L728.3 348.3M694.6 346.3L695.7 372.1M590.1 316.6L623.6 338.9M640.3 293.0L623.6 338.9M590.1 316.6L640.3 293.0M640.3 293.0L662.3 326.9M662.3 326.9L623.6 338.9M656.3 52.0L696.1 70.5M696.1 70.5L681.9 37.4M656.3 52.0L681.9 37.4M688.2 190.2L706.6 228.5M706.6 228.5L733.3 208.3M688.2 190.2L733.3 208.3M713.5 47.8L681.9 37.4M696.1 70.5L713.5 47.8M683.1 11.5L681.9 37.4M683.1 11.5L713.5 47.8M728.3 348.3L750.9 325.9M747.6 339.3L750.9 325.9M762.0 300.3L750.9 325.9M731.2 326.0L762.0 300.3M731.2 326.0L750.9 325.9M607.0 406.9L566.1 405.8M453.0 355.7L467.2 369.9M453.0 355.7L494.5 383.1M433.8 342.2L453.0 355.7M421.6 325.1L453.0 355.7M610.1 367.9L622.1 387.6M610.1 367.9L565.7 386.2M622.1 387.6L565.7 386.2M416.9 274.6L460.0 309.1M416.9 274.6L445.5 272.8M483.5 283.9L507.1 328.9M507.1 328.9L460.0 309.1M555.8 294.7L562.8 258.6M562.8 258.6L522.3 270.2M555.8 294.7L522.3 270.2M555.8 294.7L549.3 325.3M590.1 316.6L549.3 325.3M555.8 294.7L590.1 316.6M486.3 138.7L443.0 150.1M460.2 173.7L443.0 150.1M486.3 138.7L460.2 173.7M590.1 316.6L580.4 347.0M580.4 347.0L549.3 325.3M610.1 367.9L580.4 347.0M610.1 367.9L623.6 338.9M580.4 347.0L623.6 338.9M590.1 316.6L591.4 284.6M640.3 293.0L591.4 284.6M562.8 258.6L591.4 284.6M555.8 294.7L591.4 284.6M690.8 298.6L640.3 293.0M690.8 298.6L662.3 326.9M690.8 298.6L695.6 328.8M728.5 297.9L690.8 298.6M662.3 326.9L695.6 328.8M610.1 367.9L653.7 360.5M653.7 360.5L622.1 387.6M653.7 360.5L623.6 338.9M653.7 360.5L662.3 326.9M653.7 360.5L694.6 346.3M653.7 360.5L695.6 328.8M746.1 33.3L757.3 46.0M779.0 75.1L757.3 46.0M652.7 17.8L656.3 52.0M652.7 17.8L681.9 37.4M683.1 11.5L652.7 17.8M573.0 157.2L606.9 184.5M575.0 212.3L606.9 184.5M688.2 190.2L717.1 161.7M733.3 208.3L717.1 161.7M773.4 76.5L779.0 75.1M773.4 76.5L757.3 46.0M773.4 76.5L794.3 109.3M779.0 75.1L794.3 109.3M773.4 76.5L746.2 61.9M769.0 101.6L746.2 61.9M773.4 76.5L769.0 101.6M550.0 75.8L493.2 70.2M516.6 105.6L493.2 70.2M550.0 75.8L516.6 105.6M550.0 75.8L580.2 85.5M584.7 50.5L580.2 85.5M584.7 50.5L550.0 75.8M516.6 105.6L556.5 112.5M550.0 75.8L556.5 112.5M556.5 112.5L580.2 85.5M713.5 47.8L720.9 32.0M746.2 61.9L713.5 47.8M746.2 61.9L720.9 32.0M683.1 11.5L720.9 32.0M762.0 300.3L773.3 305.3M773.3 305.3L750.9 325.9M747.6 339.3L773.3 305.3M761.7 324.0L747.6 339.3M761.7 324.0L773.3 305.3M805.0 197.4L796.9 168.8M796.9 168.8L789.9 220.1M805.0 197.4L789.9 220.1M809.4 203.5L805.0 197.4M809.4 203.5L806.1 155.7M805.0 197.4L806.1 155.7M806.1 155.7L796.9 168.8M769.0 101.6L780.9 141.5M769.0 101.6L761.5 124.8M761.5 124.8L780.9 141.5M783.1 176.6L767.0 196.1M767.0 196.1L789.9 220.1M783.1 176.6L789.9 220.1M796.9 168.8L783.1 176.6M796.9 168.8L780.9 141.5M783.1 176.6L780.9 141.5M566.1 405.8L529.9 399.1M542.0 397.4L566.1 405.8M542.0 397.4L529.9 399.1M529.9 399.1L494.5 383.1M498.6 387.3L529.9 399.1M542.0 397.4L494.5 383.1M453.0 355.7L475.2 361.7M494.5 383.1L475.2 361.7M681.6 387.0L649.0 399.5M607.0 406.9L649.0 399.5M653.7 360.5L664.9 379.0M664.9 379.0L622.1 387.6M664.9 379.0L695.7 372.1M694.6 346.3L664.9 379.0M377.7 240.4L380.1 249.2M377.7 240.4L392.2 283.6M371.0 206.2L377.7 240.4M522.5 302.5L522.3 270.2M522.5 302.5L483.5 283.9M522.5 302.5L507.1 328.9M507.1 328.9L549.3 325.3M522.5 302.5L549.3 325.3M522.5 302.5L555.8 294.7M507.1 328.9L544.3 348.4M522.4 361.2L507.1 328.9M522.4 361.2L544.3 348.4M549.3 325.3L544.3 348.4M580.4 347.0L544.3 348.4M493.6 202.7L466.0 215.0M460.2 173.7L493.6 202.7M460.2 173.7L466.0 215.0M455.8 245.3L466.0 215.0M489.6 242.2L466.0 215.0M493.6 202.7L489.6 242.2M530.8 185.7L527.6 229.6M493.6 202.7L530.8 185.7M493.6 202.7L527.6 229.6M527.6 229.6L522.3 270.2M562.8 258.6L527.6 229.6M489.6 242.2L527.6 229.6M562.8 258.6L575.0 212.3M575.0 212.3L527.6 229.6M516.6 105.6L525.6 143.9M516.6 105.6L486.3 138.7M486.3 138.7L525.6 143.9M556.5 112.5L525.6 143.9M525.6 143.9L530.8 185.7M525.6 143.9L573.0 157.2M556.5 112.5L573.0 157.2M762.0 300.3L748.9 284.5M762.0 300.3L772.7 264.8M772.7 264.8L748.9 284.5M731.2 326.0L748.9 284.5M728.5 297.9L748.9 284.5M801.8 237.8L805.0 197.4M801.8 237.8L789.9 220.1M801.8 237.8L809.4 203.5M720.2 264.9L690.8 298.6M720.2 264.9L728.5 297.9M720.2 264.9L748.9 284.5M720.2 264.9L733.3 208.3M706.6 228.5L720.2 264.9M643.1 -4.3L612.4 1.3M652.7 17.8L612.4 1.3M652.7 17.8L643.1 -4.3M683.1 11.5L643.1 -4.3M643.1 -4.3L603.6 -21.8M612.4 1.3L603.6 -21.8M706.6 228.5L657.8 234.3M688.2 190.2L657.8 234.3M737.5 91.5L742.3 136.2M761.5 124.8L742.3 136.2M737.5 91.5L761.5 124.8M737.5 91.5L713.5 47.8M696.1 70.5L737.5 91.5M737.5 91.5L746.2 61.9M769.0 101.6L737.5 91.5M733.3 208.3L747.5 171.7M767.0 196.1L733.3 208.3M767.0 196.1L747.5 171.7M717.1 161.7L747.5 171.7M742.3 136.2L747.5 171.7M717.1 161.7L742.3 136.2M612.4 1.3L573.2 -6.7M603.6 -21.8L573.2 -6.7M573.2 -6.7L579.4 15.2M612.4 1.3L579.4 15.2M619.5 31.0L656.3 52.0M652.7 17.8L619.5 31.0M619.5 31.0L579.4 15.2M584.7 50.5L579.4 15.2M619.5 31.0L584.7 50.5M619.5 31.0L612.4 1.3M742.4 38.6L720.9 32.0M746.2 61.9L742.4 38.6M773.4 76.5L742.4 38.6M742.4 38.6L757.3 46.0M709.3 12.1L683.1 11.5M709.3 12.1L720.9 32.0M709.3 12.1L742.4 38.6M599.3 -30.5L567.8 -29.7M603.6 -21.8L567.8 -29.7M599.3 -30.5L603.6 -21.8M629.9 -27.6L603.6 -21.8M599.3 -30.5L629.9 -27.6M747.6 339.3L735.1 352.8M720.2 363.9L735.1 352.8M762.0 300.3L785.8 270.5M785.8 270.5L773.3 305.3M773.3 305.3L792.5 271.4M785.8 270.5L792.5 271.4M785.8 270.5L772.7 264.8M801.8 237.8L792.5 271.4M785.8 270.5L801.8 237.8M785.8 270.5L789.9 220.1M789.9 220.1L772.7 264.8M792.5 271.4L785.6 288.4M773.3 305.3L785.6 288.4M761.7 324.0L785.6 288.4M769.0 101.6L791.2 124.2M791.2 124.2L780.9 141.5M794.3 109.3L791.2 124.2M773.4 76.5L791.2 124.2M796.9 168.8L791.2 124.2M806.1 155.7L791.2 124.2M806.1 155.7L794.3 109.3M766.1 157.4L780.9 141.5M766.1 157.4L761.5 124.8M766.1 157.4L783.1 176.6M766.1 157.4L742.3 136.2M766.1 157.4L747.5 171.7M766.1 157.4L767.0 196.1M511.7 377.5L494.5 383.1M542.0 397.4L511.7 377.5M511.7 377.5L475.2 361.7M511.7 377.5L565.7 386.2M522.4 361.2L565.7 386.2M522.4 361.2L511.7 377.5M542.0 397.4L565.7 386.2M481.9 347.5L522.4 361.2M481.9 347.5L507.1 328.9M481.9 347.5L460.0 309.1M481.9 347.5L511.7 377.5M481.9 347.5L475.2 361.7M566.1 405.8L590.9 402.5M607.0 406.9L590.9 402.5M622.1 387.6L590.9 402.5M565.7 386.2L590.9 402.5M542.0 397.4L590.9 402.5M664.9 379.0L642.3 397.6M622.1 387.6L642.3 397.6M642.3 397.6L590.9 402.5M642.3 397.6L649.0 399.5M681.6 387.0L642.3 397.6M607.0 406.9L642.3 397.6M794.3 109.3L800.3 123.3M806.1 155.7L800.3 123.3M416.0 178.8L412.3 135.6M416.0 178.8L443.0 150.1M412.3 135.6L443.0 150.1M408.6 219.3L385.9 225.0M416.9 274.6L385.9 225.0M416.9 274.6L408.6 219.3M377.7 240.4L373.1 197.9M377.7 240.4L385.9 225.0M385.9 225.0L373.1 197.9M371.0 206.2L373.1 197.9M385.9 225.0L394.4 181.0M408.6 219.3L394.4 181.0M408.6 219.3L416.0 178.8M416.0 178.8L394.4 181.0M412.3 135.6L394.4 181.0M392.9 272.8L385.9 225.0M377.7 240.4L392.9 272.8M392.9 272.8L415.9 302.3M415.9 302.3L416.9 274.6M392.9 272.8L416.9 274.6M392.9 272.8L392.2 283.6M392.9 272.8L421.6 325.1M415.9 302.3L421.6 325.1M565.8 368.1L580.4 347.0M565.8 368.1L544.3 348.4M565.8 368.1L565.7 386.2M565.8 368.1L610.1 367.9M522.4 361.2L565.8 368.1M525.6 143.9L497.9 168.7M486.3 138.7L497.9 168.7M460.2 173.7L497.9 168.7M493.6 202.7L497.9 168.7M530.8 185.7L497.9 168.7M759.9 241.2L748.9 284.5M759.9 241.2L772.7 264.8M789.9 220.1L759.9 241.2M767.0 196.1L759.9 241.2M720.2 264.9L759.9 241.2M733.3 208.3L759.9 241.2M629.9 -27.6L658.9 -12.5M603.6 -21.8L658.9 -12.5M643.1 -4.3L658.9 -12.5M674.2 -15.0L658.9 -12.5M629.9 -27.6L674.2 -15.0M683.1 11.5L658.9 -12.5M709.3 12.1L658.9 -12.5M709.3 12.1L674.2 -15.0M665.8 151.6L688.2 190.2M665.8 151.6L717.1 161.7M584.7 50.5L612.9 80.2M612.9 80.2L580.2 85.5M619.5 31.0L612.9 80.2M612.9 80.2L656.3 52.0M556.5 112.5L597.6 115.4M573.0 157.2L597.6 115.4M597.6 115.4L580.2 85.5M612.9 80.2L597.6 115.4M640.3 114.4L597.6 115.4M612.9 80.2L640.3 114.4M706.6 228.5L685.1 265.5M685.1 265.5L657.8 234.3M720.2 264.9L685.1 265.5M690.8 298.6L685.1 265.5M640.3 293.0L685.1 265.5M640.3 293.0L657.8 234.3M606.9 184.5L618.9 214.5M575.0 212.3L618.9 214.5M445.5 24.5L424.8 59.1M445.5 24.5L412.3 59.1M412.3 59.1L424.8 59.1M424.8 59.1L464.7 23.0M445.5 24.5L464.7 23.0M424.8 59.1L452.4 50.2M464.7 23.0L452.4 50.2M603.6 -21.8L541.3 -16.5M541.3 -16.5L567.8 -29.7M573.2 -6.7L541.3 -16.5M531.0 9.4L579.4 15.2M531.0 9.4L573.2 -6.7M531.0 9.4L541.3 -16.5M674.2 -15.0L706.1 0.9M709.3 12.1L706.1 0.9M686.8 -9.3L706.1 0.9M686.8 -9.3L674.2 -15.0M472.5 1.6L504.0 -14.9M527.6 -22.2L567.8 -29.7M542.8 -26.0L567.8 -29.7M542.8 -26.0L527.6 -22.2M527.6 -22.2L504.0 -14.9M527.6 -22.2L541.3 -16.5M434.2 33.9L412.3 59.1M445.5 24.5L434.2 33.9M472.5 1.6L445.5 24.5M472.5 1.6L434.2 33.9M800.9 249.1L792.5 271.4M801.8 237.8L800.9 249.1M809.4 203.5L800.9 249.1M445.9 327.6L481.9 347.5M445.9 327.6L460.0 309.1M445.9 327.6L416.9 274.6M415.9 302.3L445.9 327.6M445.9 327.6L475.2 361.7M445.9 327.6L453.0 355.7M445.9 327.6L421.6 325.1M695.7 372.1L672.0 386.0M664.9 379.0L672.0 386.0M642.3 397.6L672.0 386.0M681.6 387.0L672.0 386.0M402.5 105.3L433.0 85.1M402.5 105.3L412.3 135.6M412.3 135.6L433.0 85.1M424.8 59.1L433.0 85.1M402.5 105.3L424.8 59.1M433.0 85.1L452.4 50.2M424.8 243.1L416.9 274.6M424.8 243.1L445.5 272.8M424.8 243.1L408.6 219.3M424.8 243.1L455.8 245.3M472.5 1.6L488.0 -3.2M488.0 -3.2L445.5 24.5M488.0 -3.2L464.7 23.0M488.0 -3.2L504.0 -14.9M488.0 -3.2L527.6 -22.2M488.0 -3.2L541.3 -16.5M371.0 206.2L370.6 176.6M373.1 197.9L370.6 176.6M373.1 197.9L375.7 156.8M375.7 156.8L370.6 176.6M375.7 156.8L380.2 181.3M373.1 197.9L380.2 181.3M385.9 225.0L380.2 181.3M380.2 181.3L394.4 181.0M665.8 151.6L621.9 151.1M640.3 114.4L665.8 151.6M640.3 114.4L621.9 151.1M621.9 151.1L597.6 115.4M573.0 157.2L621.9 151.1M621.9 151.1L606.9 184.5M665.8 151.6L707.3 115.7M707.3 115.7L717.1 161.7M707.3 115.7L742.3 136.2M707.3 115.7L737.5 91.5M707.3 115.7L696.1 70.5M575.0 212.3L608.1 251.1M562.8 258.6L608.1 251.1M608.1 251.1L618.9 214.5M608.1 251.1L591.4 284.6M608.1 251.1L657.8 234.3M657.8 234.3L618.9 214.5M640.3 293.0L608.1 251.1M644.3 187.7L606.9 184.5M644.3 187.7L618.9 214.5M644.3 187.7L621.9 151.1M665.8 151.6L644.3 187.7M688.2 190.2L644.3 187.7M644.3 187.7L657.8 234.3M391.1 93.7L378.8 128.7M402.5 105.3L395.9 92.3M424.8 59.1L395.9 92.3M412.3 59.1L395.9 92.3M391.1 93.7L412.3 59.1M391.1 93.7L395.9 92.3M493.2 70.2L522.3 39.5M550.0 75.8L522.3 39.5M488.2 32.6L464.7 23.0M488.2 32.6L452.4 50.2M488.2 32.6L522.3 39.5M531.0 9.4L522.3 39.5M531.0 9.4L488.2 32.6M488.2 32.6L493.2 70.2M730.6 19.5L709.3 12.1M730.6 19.5L742.4 38.6M730.6 19.5L706.1 0.9M730.6 19.5L757.3 46.0M746.1 33.3L730.6 19.5M412.3 59.1L406.1 68.7M391.1 93.7L406.1 68.7M595.2 -32.3L567.8 -29.7M599.3 -30.5L595.2 -32.3M629.9 -27.6L595.2 -32.3M808.6 168.9L800.3 123.3M808.6 168.9L806.1 155.7M809.4 203.5L808.6 168.9M470.8 109.0L443.0 150.1M486.3 138.7L470.8 109.0M516.6 105.6L470.8 109.0M470.8 109.0L493.2 70.2M412.3 135.6L441.2 112.1M443.0 150.1L441.2 112.1M433.0 85.1L441.2 112.1M470.8 109.0L441.2 112.1M439.4 209.0L416.0 178.8M439.4 209.0L408.6 219.3M439.4 209.0L424.8 243.1M439.4 209.0L466.0 215.0M460.2 173.7L439.4 209.0M439.4 209.0L455.8 245.3M439.4 209.0L443.0 150.1M507.7 -0.7L531.0 9.4M507.7 -0.7L541.3 -16.5M488.0 -3.2L507.7 -0.7M507.7 -0.7L464.7 23.0M507.7 -0.7L488.2 32.6M373.2 151.1L370.6 176.6M373.2 151.1L375.7 156.8M373.2 151.1L378.8 128.7M388.2 146.6L375.7 156.8M388.2 146.6L380.2 181.3M388.2 146.6L394.4 181.0M388.2 146.6L412.3 135.6M388.2 146.6L402.5 105.3M640.3 114.4L665.1 94.9M665.8 151.6L665.1 94.9M707.3 115.7L665.1 94.9M696.1 70.5L665.1 94.9M656.3 52.0L665.1 94.9M612.9 80.2L665.1 94.9M557.0 26.6L579.4 15.2M531.0 9.4L557.0 26.6M557.0 26.6L522.3 39.5M584.7 50.5L557.0 26.6M550.0 75.8L557.0 26.6M493.2 70.2L463.3 63.2M488.2 32.6L463.3 63.2M463.3 63.2L452.4 50.2M463.3 63.2L433.0 85.1M380.6 123.6L395.9 92.3M391.1 93.7L380.6 123.6M380.6 123.6L378.8 128.7M373.2 151.1L380.6 123.6M375.7 156.8L380.6 123.6M458.6 86.6L433.0 85.1M458.6 86.6L441.2 112.1M458.6 86.6L463.3 63.2M470.8 109.0L458.6 86.6M458.6 86.6L493.2 70.2M395.9 92.3L386.0 124.1M380.6 123.6L386.0 124.1M402.5 105.3L386.0 124.1M388.2 146.6L386.0 124.1M375.7 156.8L386.0 124.1" stroke="#000" stroke-width="1" fill="none" shape-rendering="crispEdges"/>
<path d="M371.5 211.6L371.6 213.1M371.6 213.1L371.8 214.6M371.8 214.6L372.0 216.2M372.0 216.2L372.3 217.7M372.3 217.7L372.5 219.2M372.5 219.2L372.8 220.7M372.8 220.7L373.1 222.3M373.1 222.3L373.4 223.8M373.4 223.8L373.7 225.3M373.7 225.3L374.0 226.8M374.0 226.8L374.4 228.3M374.4 228.3L374.7 229.9M374.7 229.9L375.1 231.4M375.1 231.4L375.5 232.9M375.5 232.9L375.9 234.4M375.9 234.4L376.3 235.9M376.3 235.9L376.8 237.4M376.8 237.4L377.3 238.9M377.3 238.9L377.7 240.4M377.7 240.4L378.2 241.8M378.2 241.8L378.7 243.3M378.7 243.3L379.3 244.8M379.3 244.8L379.8 246.3M379.8 246.3L380.4 247.8M380.4 247.8L381.0 249.2M381.0 249.2L381.6 250.7M381.6 250.7L382.2 252.2M382.2 252.2L382.8 253.6M382.8 253.6L383.4 255.1M383.4 255.1L384.1 256.5M384.1 256.5L384.8 258.0M384.8 258.0L385.5 259.4M385.5 259.4L386.2 260.8M386.2 260.8L386.9 262.3M386.9 262.3L387.7 263.7M387.7 263.7L388.4 265.1M388.4 265.1L389.2 266.5M389.2 266.5L390.0 267.9M390.0 267.9L390.8 269.3M390.8 269.3L391.6 270.7M391.6 270.7L392.4 272.1M392.4 272.1L393.3 273.5M393.3 273.5L394.2 274.9M394.2 274.9L395.0 276.3M395.0 276.3L395.9 277.6M395.9 277.6L396.9 279.0M396.9 279.0L397.8 280.4M397.8 280.4L398.7 281.7M398.7 281.7L399.7 283.1M399.7 283.1L400.7 284.4M400.7 284.4L401.7 285.7M401.7 285.7L402.7 287.0M402.7 287.0L403.7 288.4M403.7 288.4L404.7 289.7M404.7 289.7L405.8 291.0M405.8 291.0L406.8 292.3M406.8 292.3L407.9 293.5M407.9 293.5L409.0 294.8M409.0 294.8L410.1 296.1M410.1 296.1L411.2 297.4M411.2 297.4L412.4 298.6M412.4 298.6L413.5 299.9M413.5 299.9L414.7 301.1M414.7 301.1L415.9 302.3M415.9 302.3L417.1 303.5M417.1 303.5L418.3 304.8M418.3 304.8L419.5 306.0M419.5 306.0L420.7 307.1M420.7 307.1L422.0 308.3M422.0 308.3L423.2 309.5M423.2 309.5L424.5 310.7M424.5 310.7L425.8 311.8M425.8 311.8L427.1 313.0M427.1 313.0L428.4 314.1M428.4 314.1L429.7 315.3M429.7 315.3L431.1 316.4M431.1 316.4L432.4 317.5M432.4 317.5L433.8 318.6M433.8 318.6L435.2 319.7M435.2 319.7L436.6 320.8M436.6 320.8L438.0 321.8M438.0 321.8L439.4 322.9M439.4 322.9L440.8 324.0M440.8 324.0L442.3 325.0M442.3 325.0L443.7 326.0M443.7 326.0L445.2 327.1M445.2 327.1L446.7 328.1M446.7 328.1L448.2 329.1M448.2 329.1L449.7 330.1M449.7 330.1L451.2 331.0M451.2 331.0L452.7 332.0M452.7 332.0L454.2 333.0M454.2 333.0L455.8 333.9M455.8 333.9L457.3 334.9M457.3 334.9L458.9 335.8M458.9 335.8L460.5 336.7M460.5 336.7L462.1 337.6M462.1 337.6L463.7 338.5M463.7 338.5L465.3 339.4M465.3 339.4L466.9 340.2M466.9 340.2L468.5 341.1M468.5 341.1L470.2 341.9M470.2 341.9L471.8 342.8M471.8 342.8L473.5 343.6M473.5 343.6L475.2 344.4M475.2 344.4L476.8 345.2M476.8 345.2L478.5 346.0M478.5 346.0L480.2 346.7M480.2 346.7L481.9 347.5M481.9 347.5L483.6 348.2M483.6 348.2L485.4 349.0M485.4 349.0L487.1 349.7M487.1 349.7L488.8 350.4M488.8 350.4L490.6 351.1M490.6 351.1L492.4 351.8M492.4 351.8L494.1 352.5M494.1 352.5L495.9 353.1M495.9 353.1L497.7 353.8M497.7 353.8L499.5 354.4M499.5 354.4L501.3 355.0M501.3 355.0L503.1 355.6M503.1 355.6L504.9 356.2M504.9 356.2L506.7 356.8M506.7 356.8L508.5 357.4M508.5 357.4L510.4 357.9M510.4 357.9L512.2 358.5M512.2 358.5L514.0 359.0M514.0 359.0L515.9 359.5M515.9 359.5L517.8 360.0M517.8 360.0L519.6 360.5M519.6 360.5L521.5 361.0M521.5 361.0L523.4 361.5M523.4 361.5L525.2 361.9M525.2 361.9L527.1 362.3M527.1 362.3L529.0 362.8M529.0 362.8L530.9 363.2M530.9 363.2L532.8 363.6M532.8 363.6L534.7 363.9M534.7 363.9L536.6 364.3M536.6 364.3L538.6 364.7M538.6 364.7L540.5 365.0M540.5 365.0L542.4 365.3M542.4 365.3L544.3 365.6M544.3 365.6L546.3 365.9M546.3 365.9L548.2 366.2M548.2 366.2L550.1 366.5M550.1 366.5L552.1 366.7M552.1 366.7L554.0 367.0M554.0 367.0L556.0 367.2M556.0 367.2L557.9 367.4M557.9 367.4L559.9 367.6M559.9 367.6L561.8 367.8M561.8 367.8L563.8 368.0M563.8 368.0L565.8 368.1M565.8 368.1L567.7 368.3M567.7 368.3L569.7 368.4M569.7 368.4L571.7 368.5M571.7 368.5L573.6 368.6M573.6 368.6L575.6 368.7M575.6 368.7L577.6 368.8M577.6 368.8L579.5 368.8M579.5 368.8L581.5 368.9M581.5 368.9L583.5 368.9M583.5 368.9L585.5 368.9M585.5 368.9L587.4 368.9M587.4 368.9L589.4 368.9M589.4 368.9L591.4 368.9M591.4 368.9L593.4 368.8M593.4 368.8L595.3 368.8M595.3 368.8L597.3 368.7M597.3 368.7L599.3 368.6M599.3 368.6L601.3 368.5M601.3 368.5L603.2 368.4M603.2 368.4L605.2 368.3M605.2 368.3L607.2 368.1M607.2 368.1L609.1 368.0M609.1 368.0L611.1 367.8M611.1 367.8L613.1 367.6M613.1 367.6L615.0 367.4M615.0 367.4L617.0 367.2M617.0 367.2L619.0 367.0M619.0 367.0L620.9 366.7M620.9 366.7L622.9 366.5M622.9 366.5L624.8 366.2M624.8 366.2L626.8 365.9M626.8 365.9L628.7 365.6M628.7 365.6L630.7 365.3M630.7 365.3L632.6 365.0M632.6 365.0L634.5 364.7M634.5 364.7L636.5 364.3M636.5 364.3L638.4 363.9M638.4 363.9L640.3 363.6M640.3 363.6L642.2 363.2M642.2 363.2L644.2 362.8M644.2 362.8L646.1 362.3M646.1 362.3L648.0 361.9M648.0 361.9L649.9 361.5M649.9 361.5L651.8 361.0M651.8 361.0L653.7 360.5M653.7 360.5L655.6 360.0M655.6 360.0L657.4 359.5M657.4 359.5L659.3 359.0M659.3 359.0L661.2 358.5M661.2 358.5L663.1 357.9M663.1 357.9L664.9 357.4M664.9 357.4L666.8 356.8M666.8 356.8L668.6 356.2M668.6 356.2L670.5 355.6M670.5 355.6L672.3 355.0M672.3 355.0L674.1 354.4M674.1 354.4L675.9 353.8M675.9 353.8L677.7 353.1M677.7 353.1L679.5 352.5M679.5 352.5L681.3 351.8M681.3 351.8L683.1 351.1M683.1 351.1L684.9 350.4M684.9 350.4L686.7 349.7M686.7 349.7L688.5 349.0M688.5 349.0L690.2 348.2M690.2 348.2L692.0 347.5M692.0 347.5L693.7 346.7M693.7 346.7L695.4 346.0M695.4 346.0L697.2 345.2M697.2 345.2L698.9 344.4M698.9 344.4L700.6 343.6M700.6 343.6L702.3 342.7M702.3 342.7L704.0 341.9M704.0 341.9L705.7 341.1M705.7 341.1L707.3 340.2M707.3 340.2L709.0 339.3M709.0 339.3L710.6 338.5M710.6 338.5L712.3 337.6M712.3 337.6L713.9 336.7M713.9 336.7L715.5 335.7M715.5 335.7L717.2 334.8M717.2 334.8L718.8 333.9M718.8 333.9L720.3 332.9M720.3 332.9L721.9 332.0M721.9 332.0L723.5 331.0M723.5 331.0L725.1 330.0M725.1 330.0L726.6 329.0M726.6 329.0L728.1 328.0M728.1 328.0L729.7 327.0M729.7 327.0L731.2 326.0M731.2 326.0L732.7 324.9M732.7 324.9L734.2 323.9M734.2 323.9L735.6 322.8M735.6 322.8L737.1 321.8M737.1 321.8L738.6 320.7M738.6 320.7L740.0 319.6M740.0 319.6L741.4 318.5M741.4 318.5L742.9 317.4M742.9 317.4L744.3 316.3M744.3 316.3L745.7 315.2M745.7 315.2L747.0 314.0M747.0 314.0L748.4 312.9M748.4 312.9L749.8 311.7M749.8 311.7L751.1 310.6M751.1 310.6L752.4 309.4M752.4 309.4L753.7 308.2M753.7 308.2L755.0 307.0M755.0 307.0L756.3 305.8M756.3 305.8L757.6 304.6M757.6 304.6L758.9 303.4M758.9 303.4L760.1 302.2M760.1 302.2L761.4 301.0M761.4 301.0L762.6 299.7M762.6 299.7L763.8 298.5M763.8 298.5L765.0 297.2M765.0 297.2L766.2 296.0M766.2 296.0L767.3 294.7M767.3 294.7L768.5 293.4M768.5 293.4L769.6 292.1M769.6 292.1L770.7 290.8M770.7 290.8L771.8 289.5M771.8 289.5L772.9 288.2M772.9 288.2L774.0 286.9M774.0 286.9L775.1 285.6M775.1 285.6L776.1 284.2M776.1 284.2L777.2 282.9M777.2 282.9L778.2 281.5M778.2 281.5L779.2 280.2M779.2 280.2L780.2 278.8M780.2 278.8L781.2 277.5M781.2 277.5L782.1 276.1M782.1 276.1L783.1 274.7M783.1 274.7L784.0 273.3M784.0 273.3L784.9 271.9M784.9 271.9L785.8 270.5M785.8 270.5L786.7 269.1M786.7 269.1L787.5 267.7M787.5 267.7L788.4 266.3M788.4 266.3L789.2 264.9M789.2 264.9L790.0 263.5M790.0 263.5L790.8 262.0M790.8 262.0L791.6 260.6M791.6 260.6L792.4 259.2M792.4 259.2L793.2 257.7M793.2 257.7L793.9 256.3M793.9 256.3L794.6 254.8M794.6 254.8L795.3 253.4M795.3 253.4L796.0 251.9M796.0 251.9L796.7 250.4M796.7 250.4L797.4 248.9M797.4 248.9L798.0 247.5M798.0 247.5L798.6 246.0M798.6 246.0L799.2 244.5M799.2 244.5L799.8 243.0M799.8 243.0L800.4 241.5M800.4 241.5L801.0 240.0M801.0 240.0L801.5 238.5M801.5 238.5L802.0 237.0M802.0 237.0L802.6 235.5M802.6 235.5L803.0 234.0M803.0 234.0L803.5 232.5M803.5 232.5L804.0 231.0M804.0 231.0L804.4 229.5M804.4 229.5L804.9 228.0M804.9 228.0L805.3 226.5M805.3 226.5L805.7 224.9M805.7 224.9L806.0 223.4M806.0 223.4L806.4 221.9M806.4 221.9L806.8 220.4M806.8 220.4L807.1 218.8M807.1 218.8L807.4 217.3M807.4 217.3L807.7 215.8M807.7 215.8L808.0 214.2M808.0 214.2L808.2 212.7M808.2 212.7L808.5 211.2M808.5 211.2L808.7 209.6M808.7 209.6L808.9 208.1M808.9 208.1L809.1 206.6M809.1 206.6L809.3 205.0M809.3 205.0L809.4 203.5M809.4 203.5L809.6 201.9M809.6 201.9L809.7 200.4M809.7 200.4L809.8 198.9M809.8 198.9L809.9 197.3M809.9 197.3L810.0 195.8M810.0 195.8L810.0 194.2M810.0 194.2L810.1 192.7M739.9 26.4L739.2 25.8M739.2 25.8L738.6 25.2M738.6 25.2L737.8 24.6M737.8 24.6L737.1 24.0M737.1 24.0L736.4 23.4M736.4 23.4L735.7 22.9M735.7 22.9L734.9 22.3M734.9 22.3L734.1 21.8M734.1 21.8L733.4 21.3M733.4 21.3L732.6 20.8M732.6 20.8L731.8 20.3M731.8 20.3L731.0 19.8M731.0 19.8L730.2 19.3M730.2 19.3L729.3 18.8M729.3 18.8L728.5 18.4M728.5 18.4L727.6 17.9M727.6 17.9L726.8 17.5M726.8 17.5L725.9 17.1M725.9 17.1L725.0 16.7M725.0 16.7L724.1 16.3M724.1 16.3L723.2 16.0M723.2 16.0L722.3 15.6M722.3 15.6L721.3 15.2M721.3 15.2L720.4 14.9M720.4 14.9L719.4 14.6M719.4 14.6L718.5 14.3M718.5 14.3L717.5 14.0M717.5 14.0L716.5 13.7M716.5 13.7L715.5 13.4M715.5 13.4L714.5 13.2M714.5 13.2L713.5 12.9M713.5 12.9L712.5 12.7M712.5 12.7L711.4 12.5M711.4 12.5L710.4 12.3M710.4 12.3L709.3 12.1M709.3 12.1L708.3 11.9M708.3 11.9L707.2 11.8M707.2 11.8L706.1 11.6M706.1 11.6L705.0 11.5M705.0 11.5L703.9 11.4M703.9 11.4L702.8 11.3M702.8 11.3L701.7 11.2M701.7 11.2L700.5 11.1M700.5 11.1L699.4 11.0M699.4 11.0L698.2 11.0M698.2 11.0L697.1 10.9M697.1 10.9L695.9 10.9M695.9 10.9L694.7 10.9M694.7 10.9L693.5 10.9M693.5 10.9L692.3 10.9M692.3 10.9L691.1 10.9M691.1 10.9L689.9 11.0M689.9 11.0L688.7 11.0M688.7 11.0L687.4 11.1M687.4 11.1L686.2 11.2M686.2 11.2L684.9 11.3M684.9 11.3L683.7 11.4M683.7 11.4L682.4 11.5M682.4 11.5L681.1 11.7M681.1 11.7L679.9 11.8M679.9 11.8L678.6 12.0M678.6 12.0L677.3 12.2M677.3 12.2L676.0 12.4M676.0 12.4L674.7 12.6M674.7 12.6L673.3 12.8M673.3 12.8L672.0 13.0M672.0 13.0L670.7 13.3M670.7 13.3L669.3 13.6M669.3 13.6L668.0 13.8M668.0 13.8L666.6 14.1M666.6 14.1L665.3 14.4M665.3 14.4L663.9 14.8M663.9 14.8L662.5 15.1M662.5 15.1L661.1 15.4M661.1 15.4L659.7 15.8M659.7 15.8L658.3 16.2M658.3 16.2L656.9 16.6M656.9 16.6L655.5 17.0M655.5 17.0L654.1 17.4M654.1 17.4L652.7 17.8M652.7 17.8L651.3 18.2M651.3 18.2L649.8 18.7M649.8 18.7L648.4 19.2M648.4 19.2L647.0 19.7M647.0 19.7L645.5 20.2M645.5 20.2L644.1 20.7M644.1 20.7L642.6 21.2M642.6 21.2L641.2 21.7M641.2 21.7L639.7 22.3M639.7 22.3L638.2 22.8M638.2 22.8L636.7 23.4M636.7 23.4L635.3 24.0M635.3 24.0L633.8 24.6M633.8 24.6L632.3 25.2M632.3 25.2L630.8 25.8M630.8 25.8L629.3 26.5M629.3 26.5L627.8 27.1M627.8 27.1L626.3 27.8M626.3 27.8L624.8 28.5M624.8 28.5L623.3 29.2M623.3 29.2L621.8 29.9M621.8 29.9L620.2 30.6M620.2 30.6L618.7 31.3M618.7 31.3L617.2 32.1M617.2 32.1L615.7 32.8M615.7 32.8L614.1 33.6M614.1 33.6L612.6 34.4M612.6 34.4L611.1 35.2M611.1 35.2L609.5 36.0M609.5 36.0L608.0 36.8M608.0 36.8L606.4 37.7M606.4 37.7L604.9 38.5M604.9 38.5L603.4 39.4M603.4 39.4L601.8 40.2M601.8 40.2L600.3 41.1M600.3 41.1L598.7 42.0M598.7 42.0L597.2 42.9M597.2 42.9L595.6 43.8M595.6 43.8L594.1 44.7M594.1 44.7L592.5 45.7M592.5 45.7L591.0 46.6M591.0 46.6L589.4 47.6M589.4 47.6L587.8 48.6M587.8 48.6L586.3 49.6M586.3 49.6L584.7 50.5M584.7 50.5L583.2 51.6M583.2 51.6L581.6 52.6M581.6 52.6L580.1 53.6M580.1 53.6L578.5 54.6M578.5 54.6L577.0 55.7M577.0 55.7L575.4 56.8M575.4 56.8L573.8 57.8M573.8 57.8L572.3 58.9M572.3 58.9L570.7 60.0M570.7 60.0L569.2 61.1M569.2 61.1L567.6 62.2M567.6 62.2L566.1 63.4M566.1 63.4L564.5 64.5M564.5 64.5L563.0 65.6M563.0 65.6L561.5 66.8M561.5 66.8L559.9 68.0M559.9 68.0L558.4 69.1M558.4 69.1L556.8 70.3M556.8 70.3L555.3 71.5M555.3 71.5L553.8 72.7M553.8 72.7L552.2 73.9M552.2 73.9L550.7 75.1M550.7 75.1L549.2 76.4M549.2 76.4L547.7 77.6M547.7 77.6L546.1 78.9M546.1 78.9L544.6 80.1M544.6 80.1L543.1 81.4M543.1 81.4L541.6 82.7M541.6 82.7L540.1 84.0M540.1 84.0L538.6 85.2M538.6 85.2L537.1 86.5M537.1 86.5L535.6 87.9M535.6 87.9L534.1 89.2M534.1 89.2L532.6 90.5M532.6 90.5L531.2 91.8M531.2 91.8L529.7 93.2M529.7 93.2L528.2 94.5M528.2 94.5L526.8 95.9M526.8 95.9L525.3 97.2M525.3 97.2L523.8 98.6M523.8 98.6L522.4 100.0M522.4 100.0L520.9 101.4M520.9 101.4L519.5 102.8M519.5 102.8L518.1 104.2M518.1 104.2L516.6 105.6M516.6 105.6L515.2 107.0M515.2 107.0L513.8 108.4M513.8 108.4L512.4 109.8M512.4 109.8L511.0 111.3M511.0 111.3L509.6 112.7M509.6 112.7L508.2 114.1M508.2 114.1L506.8 115.6M506.8 115.6L505.4 117.0M505.4 117.0L504.1 118.5M504.1 118.5L502.7 120.0M502.7 120.0L501.3 121.4M501.3 121.4L500.0 122.9M500.0 122.9L498.7 124.4M498.7 124.4L497.3 125.9M497.3 125.9L496.0 127.4M496.0 127.4L494.7 128.9M494.7 128.9L493.4 130.4M493.4 130.4L492.0 131.9M492.0 131.9L490.8 133.4M490.8 133.4L489.5 134.9M489.5 134.9L488.2 136.4M488.2 136.4L486.9 137.9M486.9 137.9L485.6 139.4M485.6 139.4L484.4 141.0M484.4 141.0L483.1 142.5M483.1 142.5L481.9 144.0M481.9 144.0L480.7 145.6M480.7 145.6L479.4 147.1M479.4 147.1L478.2 148.7M478.2 148.7L477.0 150.2M477.0 150.2L475.8 151.8M475.8 151.8L474.7 153.3M474.7 153.3L473.5 154.9M473.5 154.9L472.3 156.4M472.3 156.4L471.2 158.0M471.2 158.0L470.0 159.5M470.0 159.5L468.9 161.1M468.9 161.1L467.8 162.7M467.8 162.7L466.6 164.2M466.6 164.2L465.5 165.8M465.5 165.8L464.4 167.4M464.4 167.4L463.3 168.9M463.3 168.9L462.3 170.5M462.3 170.5L461.2 172.1M461.2 172.1L460.2 173.7M460.2 173.7L459.1 175.2M459.1 175.2L458.1 176.8M458.1 176.8L457.1 178.4M457.1 178.4L456.0 180.0M456.0 180.0L455.0 181.5M455.0 181.5L454.0 183.1M454.0 183.1L453.1 184.7M453.1 184.7L452.1 186.3M452.1 186.3L451.1 187.8M451.1 187.8L450.2 189.4M450.2 189.4L449.3 191.0M449.3 191.0L448.3 192.5M448.3 192.5L447.4 194.1M447.4 194.1L446.5 195.7M446.5 195.7L445.7 197.3M445.7 197.3L444.8 198.8M444.8 198.8L443.9 200.4M443.9 200.4L443.1 202.0M443.1 202.0L442.2 203.5M442.2 203.5L441.4 205.1M441.4 205.1L440.6 206.6M440.6 206.6L439.8 208.2M439.8 208.2L439.0 209.7M439.0 209.7L438.2 211.3M438.2 211.3L437.4 212.8M437.4 212.8L436.7 214.4M436.7 214.4L435.9 215.9M435.9 215.9L435.2 217.5M435.2 217.5L434.5 219.0M434.5 219.0L433.8 220.5M433.8 220.5L433.1 222.1M433.1 222.1L432.4 223.6M432.4 223.6L431.8 225.1M431.8 225.1L431.1 226.7M431.1 226.7L430.5 228.2M430.5 228.2L429.8 229.7M429.8 229.7L429.2 231.2M429.2 231.2L428.6 232.7M428.6 232.7L428.0 234.2M428.0 234.2L427.5 235.7M427.5 235.7L426.9 237.2M426.9 237.2L426.3 238.7M426.3 238.7L425.8 240.1M425.8 240.1L425.3 241.6M425.3 241.6L424.8 243.1M424.8 243.1L424.3 244.6M424.3 244.6L423.8 246.0M423.8 246.0L423.3 247.5M423.3 247.5L422.9 248.9M422.9 248.9L422.4 250.4M422.4 250.4L422.0 251.8M422.0 251.8L421.6 253.2M421.6 253.2L421.2 254.7M421.2 254.7L420.8 256.1M420.8 256.1L420.4 257.5M420.4 257.5L420.1 258.9M420.1 258.9L419.7 260.3M419.7 260.3L419.4 261.7M419.4 261.7L419.1 263.1M419.1 263.1L418.7 264.5M418.7 264.5L418.5 265.9M418.5 265.9L418.2 267.2M418.2 267.2L417.9 268.6M417.9 268.6L417.7 270.0M417.7 270.0L417.4 271.3M417.4 271.3L417.2 272.6M417.2 272.6L417.0 274.0M417.0 274.0L416.8 275.3M416.8 275.3L416.6 276.6M416.6 276.6L416.4 277.9M416.4 277.9L416.3 279.2M416.3 279.2L416.1 280.5M416.1 280.5L416.0 281.8M416.0 281.8L415.9 283.1M415.9 283.1L415.8 284.3M415.8 284.3L415.7 285.6M415.7 285.6L415.6 286.9M415.6 286.9L415.5 288.1M415.5 288.1L415.5 289.3M415.5 289.3L415.5 290.6M415.5 290.6L415.4 291.8M415.4 291.8L415.4 293.0M415.4 293.0L415.4 294.2M415.4 294.2L415.5 295.4M415.5 295.4L415.5 296.6M415.5 296.6L415.5 297.7M415.5 297.7L415.6 298.9M415.6 298.9L415.7 300.0M415.7 300.0L415.8 301.2M415.8 301.2L415.9 302.3M415.9 302.3L416.0 303.4M416.0 303.4L416.1 304.6M416.1 304.6L416.2 305.7M416.2 305.7L416.4 306.8M416.4 306.8L416.6 307.8M416.6 307.8L416.8 308.9M416.8 308.9L416.9 310.0M416.9 310.0L417.2 311.0M417.2 311.0L417.4 312.1M417.4 312.1L417.6 313.1M417.6 313.1L417.9 314.1M417.9 314.1L418.1 315.1M418.1 315.1L418.4 316.1M418.4 316.1L418.7 317.1M418.7 317.1L419.0 318.1M419.0 318.1L419.3 319.1M419.3 319.1L419.6 320.0M419.6 320.0L419.9 321.0M419.9 321.0L420.3 321.9M420.3 321.9L420.7 322.8M420.7 322.8L421.0 323.8M421.0 323.8L421.4 324.7M421.4 324.7L421.8 325.6M421.8 325.6L422.2 326.4M422.2 326.4L422.7 327.3M422.7 327.3L423.1 328.2M423.1 328.2L423.6 329.0M423.6 329.0L424.0 329.8M424.0 329.8L424.5 330.7M424.5 330.7L425.0 331.5M425.0 331.5L425.5 332.3M425.5 332.3L426.0 333.1M426.0 333.1L426.5 333.8M426.5 333.8L427.1 334.6M427.1 334.6L427.6 335.4M427.6 335.4L428.2 336.1M428.2 336.1L428.8 336.8M428.8 336.8L429.4 337.6M429.4 337.6L430.0 338.3M430.0 338.3L430.6 339.0M430.6 339.0L431.2 339.6M431.2 339.6L431.8 340.3M431.8 340.3L432.5 341.0M472.8 1.5L473.4 1.1M473.4 1.1L474.0 0.8M474.0 0.8L474.6 0.4M474.6 0.4L475.2 0.1M475.2 0.1L475.8 -0.2M475.8 -0.2L476.5 -0.5M476.5 -0.5L477.1 -0.8M477.1 -0.8L477.8 -1.0M477.8 -1.0L478.5 -1.3M478.5 -1.3L479.1 -1.5M479.1 -1.5L479.8 -1.7M479.8 -1.7L480.5 -1.9M480.5 -1.9L481.2 -2.1M481.2 -2.1L481.9 -2.3M481.9 -2.3L482.7 -2.5M482.7 -2.5L483.4 -2.6M483.4 -2.6L484.1 -2.8M484.1 -2.8L484.9 -2.9M484.9 -2.9L485.6 -3.0M485.6 -3.0L486.4 -3.1M486.4 -3.1L487.2 -3.1M487.2 -3.1L488.0 -3.2M488.0 -3.2L488.7 -3.2M488.7 -3.2L489.5 -3.3M489.5 -3.3L490.3 -3.3M490.3 -3.3L491.2 -3.3M491.2 -3.3L492.0 -3.3M492.0 -3.3L492.8 -3.3M492.8 -3.3L493.7 -3.2M493.7 -3.2L494.5 -3.2M494.5 -3.2L495.4 -3.1M495.4 -3.1L496.2 -3.0M496.2 -3.0L497.1 -2.9M497.1 -2.9L498.0 -2.8M498.0 -2.8L498.9 -2.6M498.9 -2.6L499.8 -2.5M499.8 -2.5L500.7 -2.3M500.7 -2.3L501.6 -2.2M501.6 -2.2L502.5 -2.0M502.5 -2.0L503.4 -1.8M503.4 -1.8L504.4 -1.5M504.4 -1.5L505.3 -1.3M505.3 -1.3L506.3 -1.1M506.3 -1.1L507.2 -0.8M507.2 -0.8L508.2 -0.5M508.2 -0.5L509.1 -0.2M509.1 -0.2L510.1 0.1M510.1 0.1L511.1 0.4M511.1 0.4L512.1 0.8M512.1 0.8L513.1 1.1M513.1 1.1L514.1 1.5M514.1 1.5L515.1 1.9M515.1 1.9L516.1 2.3M516.1 2.3L517.1 2.7M517.1 2.7L518.2 3.1M518.2 3.1L519.2 3.5M519.2 3.5L520.3 4.0M520.3 4.0L521.3 4.5M521.3 4.5L522.4 5.0M522.4 5.0L523.4 5.5M523.4 5.5L524.5 6.0M524.5 6.0L525.6 6.5M525.6 6.5L526.6 7.0M526.6 7.0L527.7 7.6M527.7 7.6L528.8 8.2M528.8 8.2L529.9 8.8M529.9 8.8L531.0 9.4M531.0 9.4L532.1 10.0M532.1 10.0L533.2 10.6M533.2 10.6L534.4 11.3M534.4 11.3L535.5 11.9M535.5 11.9L536.6 12.6M536.6 12.6L537.7 13.3M537.7 13.3L538.9 14.0M538.9 14.0L540.0 14.7M540.0 14.7L541.2 15.4M541.2 15.4L542.3 16.2M542.3 16.2L543.5 16.9M543.5 16.9L544.6 17.7M544.6 17.7L545.8 18.5M545.8 18.5L547.0 19.3M547.0 19.3L548.1 20.1M548.1 20.1L549.3 20.9M549.3 20.9L550.5 21.8M550.5 21.8L551.7 22.6M551.7 22.6L552.9 23.5M552.9 23.5L554.1 24.4M554.1 24.4L555.2 25.3M555.2 25.3L556.4 26.2M556.4 26.2L557.7 27.1M557.7 27.1L558.9 28.0M558.9 28.0L560.1 29.0M560.1 29.0L561.3 29.9M561.3 29.9L562.5 30.9M562.5 30.9L563.7 31.9M563.7 31.9L564.9 32.9M564.9 32.9L566.1 33.9M566.1 33.9L567.4 34.9M567.4 34.9L568.6 36.0M568.6 36.0L569.8 37.0M569.8 37.0L571.1 38.1M571.1 38.1L572.3 39.1M572.3 39.1L573.5 40.2M573.5 40.2L574.8 41.3M574.8 41.3L576.0 42.4M576.0 42.4L577.3 43.6M577.3 43.6L578.5 44.7M578.5 44.7L579.7 45.8M579.7 45.8L581.0 47.0M581.0 47.0L582.2 48.2M582.2 48.2L583.5 49.4M583.5 49.4L584.7 50.5M584.7 50.5L586.0 51.8M586.0 51.8L587.2 53.0M587.2 53.0L588.5 54.2M588.5 54.2L589.7 55.4M589.7 55.4L591.0 56.7M591.0 56.7L592.2 57.9M592.2 57.9L593.5 59.2M593.5 59.2L594.8 60.5M594.8 60.5L596.0 61.8M596.0 61.8L597.3 63.1M597.3 63.1L598.5 64.4M598.5 64.4L599.8 65.7M599.8 65.7L601.0 67.1M601.0 67.1L602.3 68.4M602.3 68.4L603.5 69.8M603.5 69.8L604.8 71.1M604.8 71.1L606.0 72.5M606.0 72.5L607.3 73.9M607.3 73.9L608.5 75.3M608.5 75.3L609.8 76.7M609.8 76.7L611.0 78.1M611.0 78.1L612.3 79.5M612.3 79.5L613.5 80.9M613.5 80.9L614.8 82.4M614.8 82.4L616.0 83.8M616.0 83.8L617.2 85.3M617.2 85.3L618.5 86.7M618.5 86.7L619.7 88.2M619.7 88.2L621.0 89.7M621.0 89.7L622.2 91.2M622.2 91.2L623.4 92.7M623.4 92.7L624.6 94.2M624.6 94.2L625.9 95.7M625.9 95.7L627.1 97.2M627.1 97.2L628.3 98.7M628.3 98.7L629.5 100.3M629.5 100.3L630.7 101.8M630.7 101.8L631.9 103.3M631.9 103.3L633.2 104.9M633.2 104.9L634.4 106.5M634.4 106.5L635.6 108.0M635.6 108.0L636.8 109.6M636.8 109.6L638.0 111.2M638.0 111.2L639.1 112.8M639.1 112.8L640.3 114.4M640.3 114.4L641.5 116.0M641.5 116.0L642.7 117.6M642.7 117.6L643.9 119.2M643.9 119.2L645.0 120.8M645.0 120.8L646.2 122.4M646.2 122.4L647.4 124.1M647.4 124.1L648.5 125.7M648.5 125.7L649.7 127.3M649.7 127.3L650.8 129.0M650.8 129.0L652.0 130.6M652.0 130.6L653.1 132.3M653.1 132.3L654.2 133.9M654.2 133.9L655.4 135.6M655.4 135.6L656.5 137.3M656.5 137.3L657.6 138.9M657.6 138.9L658.7 140.6M658.7 140.6L659.8 142.3M659.8 142.3L660.9 144.0M660.9 144.0L662.0 145.7M662.0 145.7L663.1 147.3M663.1 147.3L664.2 149.0M664.2 149.0L665.3 150.7M665.3 150.7L666.3 152.4M666.3 152.4L667.4 154.1M667.4 154.1L668.5 155.8M668.5 155.8L669.5 157.5M669.5 157.5L670.6 159.2M670.6 159.2L671.6 161.0M671.6 161.0L672.6 162.7M672.6 162.7L673.7 164.4M673.7 164.4L674.7 166.1M674.7 166.1L675.7 167.8M675.7 167.8L676.7 169.5M676.7 169.5L677.7 171.3M677.7 171.3L678.7 173.0M678.7 173.0L679.7 174.7M679.7 174.7L680.7 176.4M680.7 176.4L681.6 178.1M681.6 178.1L682.6 179.9M682.6 179.9L683.6 181.6M683.6 181.6L684.5 183.3M684.5 183.3L685.4 185.0M685.4 185.0L686.4 186.8M686.4 186.8L687.3 188.5M687.3 188.5L688.2 190.2M688.2 190.2L689.1 191.9M689.1 191.9L690.0 193.6M690.0 193.6L690.9 195.4M690.9 195.4L691.8 197.1M691.8 197.1L692.7 198.8M692.7 198.8L693.6 200.5M693.6 200.5L694.4 202.2M694.4 202.2L695.3 204.0M695.3 204.0L696.1 205.7M696.1 205.7L696.9 207.4M696.9 207.4L697.8 209.1M697.8 209.1L698.6 210.8M698.6 210.8L699.4 212.5M699.4 212.5L700.2 214.2M700.2 214.2L701.0 215.9M701.0 215.9L701.8 217.6M701.8 217.6L702.5 219.3M702.5 219.3L703.3 221.0M703.3 221.0L704.0 222.7M704.0 222.7L704.8 224.3M704.8 224.3L705.5 226.0M705.5 226.0L706.2 227.7M706.2 227.7L707.0 229.4M707.0 229.4L707.7 231.0M707.7 231.0L708.4 232.7M708.4 232.7L709.0 234.4M709.0 234.4L709.7 236.0M709.7 236.0L710.4 237.7M710.4 237.7L711.0 239.3M711.0 239.3L711.7 241.0M711.7 241.0L712.3 242.6M712.3 242.6L713.0 244.2M713.0 244.2L713.6 245.9M713.6 245.9L714.2 247.5M714.2 247.5L714.8 249.1M714.8 249.1L715.4 250.7M715.4 250.7L715.9 252.3M715.9 252.3L716.5 253.9M716.5 253.9L717.1 255.5M717.1 255.5L717.6 257.1M717.6 257.1L718.1 258.7M718.1 258.7L718.7 260.3M718.7 260.3L719.2 261.8M719.2 261.8L719.7 263.4M719.7 263.4L720.2 264.9M720.2 264.9L720.7 266.5M720.7 266.5L721.1 268.0M721.1 268.0L721.6 269.6M721.6 269.6L722.1 271.1M722.1 271.1L722.5 272.6M722.5 272.6L722.9 274.1M722.9 274.1L723.3 275.6M723.3 275.6L723.8 277.1M723.8 277.1L724.1 278.6M724.1 278.6L724.5 280.1M724.5 280.1L724.9 281.6M724.9 281.6L725.3 283.0M725.3 283.0L725.6 284.5M725.6 284.5L726.0 285.9M726.0 285.9L726.3 287.4M726.3 287.4L726.6 288.8M726.6 288.8L726.9 290.2M726.9 290.2L727.2 291.6M727.2 291.6L727.5 293.0M727.5 293.0L727.8 294.4M727.8 294.4L728.1 295.8M728.1 295.8L728.3 297.2M728.3 297.2L728.6 298.5M728.6 298.5L728.8 299.9M728.8 299.9L729.0 301.2M729.0 301.2L729.2 302.6M729.2 302.6L729.4 303.9M729.4 303.9L729.6 305.2M729.6 305.2L729.8 306.5M729.8 306.5L730.0 307.8M730.0 307.8L730.1 309.1M730.1 309.1L730.3 310.4M730.3 310.4L730.4 311.7M730.4 311.7L730.5 312.9M730.5 312.9L730.7 314.1M730.7 314.1L730.8 315.4M730.8 315.4L730.8 316.6M730.8 316.6L730.9 317.8M730.9 317.8L731.0 319.0M731.0 319.0L731.1 320.2M731.1 320.2L731.1 321.4M731.1 321.4L731.1 322.6M731.1 322.6L731.2 323.7M731.2 323.7L731.2 324.9M731.2 324.9L731.2 326.0M731.2 326.0L731.2 327.1M731.2 327.1L731.1 328.2M731.1 328.2L731.1 329.3M731.1 329.3L731.1 330.4M731.1 330.4L731.0 331.5M731.0 331.5L731.0 332.5M731.0 332.5L730.9 333.6M730.9 333.6L730.8 334.6M730.8 334.6L730.7 335.6M730.7 335.6L730.6 336.7M730.6 336.7L730.5 337.7M730.5 337.7L730.3 338.7M730.3 338.7L730.2 339.6M730.2 339.6L730.0 340.6M730.0 340.6L729.9 341.5M729.9 341.5L729.7 342.5M729.7 342.5L729.5 343.4M729.5 343.4L729.3 344.3M729.3 344.3L729.1 345.2M729.1 345.2L728.9 346.1M728.9 346.1L728.7 347.0M728.7 347.0L728.5 347.8M728.5 347.8L728.2 348.7M728.2 348.7L728.0 349.5M728.0 349.5L727.7 350.3M727.7 350.3L727.4 351.2M727.4 351.2L727.1 351.9M727.1 351.9L726.8 352.7M726.8 352.7L726.5 353.5M726.5 353.5L726.2 354.3M726.2 354.3L725.9 355.0M725.9 355.0L725.5 355.7M725.5 355.7L725.2 356.4M725.2 356.4L724.8 357.1M724.8 357.1L724.4 357.8M724.4 357.8L724.1 358.5M724.1 358.5L723.7 359.2M723.7 359.2L723.3 359.8M723.3 359.8L722.9 360.4M722.9 360.4L722.5 361.1M722.5 361.1L722.0 361.7M722.0 361.7L721.6 362.3M721.6 362.3L721.1 362.8M721.1 362.8L720.7 363.4M720.7 363.4L720.2 363.9M720.2 363.9L719.7 364.5M719.7 364.5L719.2 365.0M719.2 365.0L718.7 365.5M718.7 365.5L718.2 366.0M718.2 366.0L717.7 366.5M717.7 366.5L717.2 367.0M717.2 367.0L716.7 367.4M716.7 367.4L716.1 367.8M716.1 367.8L715.6 368.3M715.6 368.3L715.0 368.7M715.0 368.7L714.4 369.1" stroke="#000" stroke-width="2" fill="none"/>
</svg>
</div>
<svg style="position:absolute;left:375px;top:32px" width="14" height="14" viewBox="0 0 14 14"><circle cx="5.8" cy="5.8" r="4.7" fill="none" stroke="#2b4f7e" stroke-width="1.8"/><path d="M9.3 9.3 L13 13" stroke="#2b4f7e" stroke-width="2.4" stroke-linecap="round"/><path d="M5.8 3.3 V8.3 M3.3 5.8 H8.3" stroke="#2b4f7e" stroke-width="1.4"/></svg>
<svg style="position:absolute;left:399px;top:32px" width="14" height="14" viewBox="0 0 14 14"><circle cx="5.8" cy="5.8" r="4.7" fill="none" stroke="#2b4f7e" stroke-width="1.8"/><path d="M9.3 9.3 L13 13" stroke="#2b4f7e" stroke-width="2.4" stroke-linecap="round"/><path d="M3.3 5.8 H8.3" stroke="#2b4f7e" stroke-width="1.5"/></svg>
<svg style="position:absolute;left:422px;top:32px" width="17" height="14" viewBox="0 0 17 14"><rect x="0.5" y="5.5" width="8" height="8" fill="none" stroke="#2b4f7e" stroke-width="1" stroke-dasharray="1.6 1.2"/><circle cx="8" cy="5.2" r="4.5" fill="#f8f9fc" stroke="#2b4f7e" stroke-width="1.7"/><path d="M11.3 8.5 L15 12.5" stroke="#2b4f7e" stroke-width="2.2" stroke-linecap="round"/><path d="M8 2.8 V7.6 M5.6 5.2 H10.4" stroke="#2b4f7e" stroke-width="1.3"/></svg>
<svg style="position:absolute;left:446px;top:31px" width="16" height="16" viewBox="0 0 16 16"><rect x="3.5" y="3.5" width="9" height="9" fill="none" stroke="#555" stroke-width="1.2"/><path d="M8 5.5 V10.5 M5.5 8 H10.5" stroke="#555" stroke-width="1.2"/><path d="M6.5 1.8 L8 0 L9.5 1.8 Z M6.5 14.2 L8 16 L9.5 14.2 Z M1.8 6.5 L0 8 L1.8 9.5 Z M14.2 6.5 L16 8 L14.2 9.5Z" fill="#4a90d8"/></svg>
<svg style="position:absolute;left:470px;top:31px" width="16" height="16" viewBox="0 0 16 16"><rect x="0.7" y="0.7" width="14.6" height="14.6" fill="none" stroke="#555" stroke-width="1.4"/><path d="M8 5 V11 M5 8 H11" stroke="#555" stroke-width="1.3"/><path d="M5.8 3.8 L8 1.5 L10.2 3.8 Z M5.8 12.2 L8 14.5 L10.2 12.2 Z M3.8 5.8 L1.5 8 L3.8 10.2 Z M12.2 5.8 L14.5 8 L12.2 10.2Z" fill="#4a90d8"/></svg>
<div class="sep" style="left:496px;top:31px;height:16px"></div>
<svg style="position:absolute;left:509px;top:31px" width="18" height="15" viewBox="0 0 18 15"><path d="M8 13.5 V1.5" stroke="#4a86c8" stroke-width="1.2"/><path d="M6.5 3 L8 0.5 L9.5 3Z" fill="#4a86c8"/><path d="M8 13.5 L2 8" stroke="#44aa44" stroke-width="1.3"/><path d="M1 6.8 L1.3 9.8 L3.8 8.5Z" fill="#44aa44"/><path d="M8 13.5 L16 9" stroke="#e0306a" stroke-width="1.3"/><path d="M17 8.3 L14 8.2 L15.3 10.8Z" fill="#e0306a"/></svg>
<svg style="position:absolute;left:534px;top:37px" width="8" height="5" viewBox="0 0 8 5"><path d="M0 0.3 L7.5 0.3 L3.75 4.6 Z" fill="#111"/></svg>
<svg style="position:absolute;left:555px;top:31px" width="15" height="15" viewBox="0 0 15 15"><path d="M1.3 13.5 V2" stroke="#44aa44" stroke-width="1.2"/><path d="M0 3 L1.3 0.5 L2.6 3Z" fill="#44aa44"/><path d="M1.3 13.5 H12.5" stroke="#d03030" stroke-width="1.2"/><path d="M11.5 12.2 L14 13.5 L11.5 14.8Z" fill="#d03030"/><text x="3" y="8.8" font-family="Liberation Sans" font-size="9" fill="#4a6a94">xy</text></svg>
<svg style="position:absolute;left:579px;top:31px" width="15" height="15" viewBox="0 0 15 15"><path d="M1.3 13.5 V2" stroke="#3a6aa8" stroke-width="1.2"/><path d="M0 3 L1.3 0.5 L2.6 3Z" fill="#3a6aa8"/><path d="M1.3 13.5 H12.5" stroke="#44aa44" stroke-width="1.2"/><path d="M11.5 12.2 L14 13.5 L11.5 14.8Z" fill="#44aa44"/><text x="3" y="8.8" font-family="Liberation Sans" font-size="9" fill="#4a6a94">yz</text></svg>
<svg style="position:absolute;left:602px;top:31px" width="15" height="15" viewBox="0 0 15 15"><path d="M1.3 13.5 V2" stroke="#d03030" stroke-width="1.2"/><path d="M0 3 L1.3 0.5 L2.6 3Z" fill="#d03030"/><path d="M1.3 13.5 H12.5" stroke="#3a6aa8" stroke-width="1.2"/><path d="M11.5 12.2 L14 13.5 L11.5 14.8Z" fill="#3a6aa8"/><text x="3" y="8.8" font-family="Liberation Sans" font-size="9" fill="#4a6a94">zx</text></svg>
<div class="sep" style="left:627px;top:31px;height:16px"></div>
<svg style="position:absolute;left:641px;top:32px" width="17" height="13" viewBox="0 0 17 13"><path d="M3 0.5 H13 A2.5 5.8 0 0 1 13 12 H3 A2.5 5.8 0 0 1 3 0.5 Z" fill="#a9a9a9" stroke="#9a9a9a" stroke-width="0.8"/><ellipse cx="3" cy="6.25" rx="2.3" ry="5.75" fill="#c4c4c4" stroke="#9a9a9a" stroke-width="0.8"/><path d="M3 6.25 H15.5" stroke="#f0f0f0" stroke-width="1"/></svg>
<svg style="position:absolute;left:665px;top:32px" width="17" height="13" viewBox="0 0 17 13"><path d="M3 0.5 H13 A2.5 5.8 0 0 1 13 12 H3 A2.5 5.8 0 0 1 3 0.5 Z" fill="#e6e6e6" stroke="#bdbdbd" stroke-width="0.8"/><ellipse cx="3" cy="6.25" rx="2.3" ry="5.75" fill="#d8d8d8" stroke="#bdbdbd" stroke-width="0.8"/><path d="M5.3 6.25 H15.5 V12 H3" fill="#aaaaaa"/></svg>
<div style="position:absolute;left:688px;top:30px;width:18px;height:18px;border:1.5px solid #2c5ca8;border-radius:3px;background:linear-gradient(#dceafa,#f4f8fd 30%,#f4f8fd 75%,#c9e3fb 80%,#d9ecfd)"></div>
<svg style="position:absolute;left:689px;top:33px" width="17" height="13" viewBox="0 0 17 13"><path d="M3 0.5 H13 A2.5 5.8 0 0 1 13 12 H3 A2.5 5.8 0 0 1 3 0.5 Z" fill="#dcdcdc" stroke="#3a5a88" stroke-width="0.8"/><ellipse cx="3" cy="6.25" rx="2.3" ry="5.75" fill="#e8e8e8" stroke="#3a5a88" stroke-width="0.8"/><path d="M3 6.25 H15.5" stroke="#3a5a88" stroke-width="1"/></svg>
<svg style="position:absolute;left:713px;top:32px" width="17" height="13" viewBox="0 0 17 13"><path d="M3 0.5 H13 A2.5 5.8 0 0 1 13 12 H3 A2.5 5.8 0 0 1 3 0.5 Z" fill="#ececec" stroke="#bcbcbc" stroke-width="0.8"/><ellipse cx="3" cy="6.25" rx="2.3" ry="5.75" fill="#e4e4e4" stroke="#bcbcbc" stroke-width="0.8"/><path d="M3 6.25 H15.5" stroke="#bcbcbc" stroke-width="1"/><rect x="2" y="0" width="1.5" height="1.5" fill="#999"/><rect x="14" y="0" width="1.5" height="1.5" fill="#999"/><rect x="14" y="11" width="1.5" height="1.5" fill="#999"/></svg>
<svg style="position:absolute;left:737px;top:31px" width="16" height="16" viewBox="0 0 16 16"><path d="M3 0.5 H13 A2.5 5.8 0 0 1 13 12 H3 A2.5 5.8 0 0 1 3 0.5 Z" fill="#dfe3e8" stroke="#6f8fb8" stroke-width="0.8"/><ellipse cx="3" cy="6.25" rx="2.3" ry="5.75" fill="#e8ecf0" stroke="#6f8fb8" stroke-width="0.8"/><path d="M3 6.25 H15.5" stroke="#6f8fb8" stroke-width="1"/><path d="M0.5 0.5 L14.5 15" stroke="#1f5a9a" stroke-width="1.3"/></svg>
<div class="sep" style="left:763px;top:31px;height:16px"></div>
<svg style="position:absolute;left:777px;top:31px" width="16" height="15" viewBox="0 0 16 15"><path d="M3 0.5 H13 A2.5 5.8 0 0 1 13 12 H3 A2.5 5.8 0 0 1 3 0.5 Z" fill="#e9e9e9" stroke="#c8c8c8" stroke-width="0.8"/><ellipse cx="3" cy="6.25" rx="2.3" ry="5.75" fill="#dcdcdc" stroke="#c8c8c8" stroke-width="0.8"/><rect x="4.5" y="0.5" width="7" height="6" fill="#e0e0e0" stroke="#9a9a9a" stroke-width="0.9" stroke-dasharray="1.5 1"/><rect x="6" y="2" width="4" height="3" fill="#9f9f9f"/></svg>
<svg style="position:absolute;left:801px;top:31px" width="16" height="15" viewBox="0 0 16 15"><g transform="translate(0,1)"><path d="M3 0.5 H13 A2.5 5.8 0 0 1 13 12 H3 A2.5 5.8 0 0 1 3 0.5 Z" fill="#a6a6a6" stroke="#a0a0a0" stroke-width="0.8"/><ellipse cx="3" cy="6.25" rx="2.3" ry="5.75" fill="#bdbdbd" stroke="#a0a0a0" stroke-width="0.8"/></g><rect x="4.5" y="0.5" width="7" height="6.5" fill="#e6e6e6" stroke="#9a9a9a" stroke-width="0.9" stroke-dasharray="1.5 1"/><rect x="6" y="2" width="4" height="3.5" fill="#c8c8c8"/></svg>
<svg style="position:absolute;left:826px;top:31px" width="16" height="15" viewBox="0 0 16 15"><rect x="0.5" y="0.5" width="13" height="13" fill="none" stroke="#b0b0b0" stroke-width="1" stroke-dasharray="1.5 1"/><rect x="3" y="4" width="6" height="6" fill="#c8c8c8"/><path d="M6 6 L15 14.5 M6 6 L6 11 L10 7.5Z" stroke="#a0a0a0" stroke-width="1" fill="#a0a0a0"/></svg>
<svg style="position:absolute;left:850px;top:31px" width="15" height="15" viewBox="0 0 15 15"><rect x="1.5" y="1.5" width="12.5" height="12.5" fill="none" stroke="#b0b0b0" stroke-width="1" stroke-dasharray="1.5 1"/><path d="M3 3 L13 13 L13 3Z" fill="#d0d0d0"/><path d="M1 0 L8 14" stroke="#a8a8a8" stroke-width="1.3"/></svg>
<div class="sep" style="left:875px;top:31px;height:16px"></div>
<svg style="position:absolute;left:888px;top:33px" width="18" height="12" viewBox="0 0 18 12"><path d="M2 6 Q9 0 16 6 Q9 12 2 6 Z" fill="none" stroke="#b9b9b9" stroke-width="1.8"/><circle cx="9" cy="6" r="1.6" fill="#b9b9b9"/><path d="M5 2.2 L13.6 10.4" stroke="#f8f9fc" stroke-width="2.6"/><path d="M5 2.2 L13.6 10.4" stroke="#2b4f7e" stroke-width="1.2"/></svg>
<svg style="position:absolute;left:913px;top:32px" width="16" height="14" viewBox="0 0 16 14"><rect x="0.6" y="0.6" width="14.8" height="12.8" fill="#fff" stroke="#2b4f7e" stroke-width="1.2"/><rect x="1" y="1" width="14" height="1.6" fill="#dde3ea"/><rect x="1" y="2.6" width="14" height="1" fill="#2b4f7e"/><path d="M3 8.3 Q8 3.500000000000001 13 8.3 Q8 13.100000000000001 3 8.3 Z" fill="#2b4f7e"/><circle cx="5.5" cy="8.3" r="0.9" fill="#fff"/><circle cx="10.5" cy="8.3" r="0.9" fill="#fff"/></svg>
<div style="position:absolute;left:936px;top:30px;width:18px;height:18px;border:1.5px solid #2c5ca8;border-radius:3px;background:linear-gradient(#dceafa,#f4f8fd 30%,#f4f8fd 75%,#c9e3fb 80%,#d9ecfd)"></div>
<svg style="position:absolute;left:937px;top:32px" width="16" height="14" viewBox="0 0 16 14"><rect x="0.6" y="0.6" width="14.8" height="12.8" fill="#fff" stroke="#2b4f7e" stroke-width="1.2"/><rect x="1" y="1" width="14" height="1.6" fill="#dde3ea"/><rect x="1" y="2.6" width="14" height="1" fill="#2b4f7e"/><path d="M3 8.3 Q8 3.500000000000001 13 8.3 Q8 13.100000000000001 3 8.3 Z" fill="#b8b8b8"/><circle cx="5.5" cy="8.3" r="0.9" fill="#fff"/><circle cx="10.5" cy="8.3" r="0.9" fill="#fff"/><path d="M4.5 5 L11.5 11.5" stroke="#2b4f7e" stroke-width="1.1"/></svg>
<svg style="position:absolute;left:961px;top:31px" width="16" height="15" viewBox="0 0 16 15"><rect x="0.6" y="0.6" width="14.8" height="13.8" fill="#fff" stroke="#2b4f7e" stroke-width="1.2"/><rect x="1" y="1" width="14" height="1.6" fill="#dde3ea"/><rect x="1" y="2.6" width="14" height="1" fill="#2b4f7e"/><path d="M4 6.6 Q8 2.9999999999999996 12 6.6 Q8 10.2 4 6.6 Z" fill="#2b4f7e"/><circle cx="6.0" cy="6.6" r="0.9" fill="#fff"/><circle cx="10.0" cy="6.6" r="0.9" fill="#fff"/><path d="M4 11 Q8 7.4 12 11 Q8 14.6 4 11 Z" fill="#b8b8b8"/><circle cx="6.0" cy="11" r="0.9" fill="#fff"/><circle cx="10.0" cy="11" r="0.9" fill="#fff"/><path d="M5.8 8.5 L10 12.6" stroke="#2b4f7e" stroke-width="1"/></svg>
<svg style="position:absolute;left:986px;top:33px" width="13" height="12" viewBox="0 0 13 12"><path d="M3 3.2 A4.6 4.6 0 1 1 2 8" fill="none" stroke="#2b4f7e" stroke-width="1.3"/><path d="M0.5 0.8 L0.8 5 L4.8 4.2Z" fill="#2b4f7e"/></svg>
<div class="sep" style="left:1011px;top:31px;height:16px"></div>
<svg style="position:absolute;left:1025px;top:30px" width="16" height="18" viewBox="0 0 16 18"><path d="M8.5 4 L14.5 1 M8.5 13.8 L14.5 16.8" stroke="#777" stroke-width="0.9" stroke-dasharray="1.2 0.6"/><path d="M1 6.9 L9 4 L9 13.8 L1 10.8 Z" fill="#4a7cbf"/><path d="M9 6.5 A3 2.5 0 0 1 9 11.5" fill="none" stroke="#4a7cbf" stroke-width="1.3"/></svg>
<div style="position:absolute;left:1048px;top:30px;width:18px;height:18px;border:1.5px solid #2c5ca8;border-radius:3px;background:linear-gradient(#dceafa,#f4f8fd 30%,#f4f8fd 75%,#c9e3fb 80%,#d9ecfd)"></div>
<div style="position:absolute;left:1072px;top:30px;width:18px;height:18px;border:1.5px solid #2c5ca8;border-radius:3px;background:linear-gradient(#dceafa,#f4f8fd 30%,#f4f8fd 75%,#c9e3fb 80%,#d9ecfd)"></div>
<div style="position:absolute;left:1096px;top:30px;width:18px;height:18px;border:1.5px solid #2c5ca8;border-radius:3px;background:linear-gradient(#dceafa,#f4f8fd 30%,#f4f8fd 75%,#c9e3fb 80%,#d9ecfd)"></div>
<svg style="position:absolute;left:1050px;top:32px" width="15" height="14" viewBox="0 0 15 14"><rect x="0.7" y="0.7" width="10" height="9" fill="none" stroke="#2b4f7e" stroke-width="1"/><rect x="3.5" y="3.5" width="10.5" height="9.5" fill="#d8dde6" stroke="#2b4f7e" stroke-width="1"/><path d="M0.7 9.7 L3.5 13 M10.7 0.7 L14 3.5" stroke="#2b4f7e" stroke-width="0.9"/></svg>
<svg style="position:absolute;left:1074px;top:32px" width="15" height="14" viewBox="0 0 15 14"><rect x="0.7" y="0.7" width="13.6" height="12.6" rx="2.5" fill="none" stroke="#2b4f7e" stroke-width="1"/><rect x="3.5" y="3.5" width="8" height="7" fill="#d8dde6" stroke="#2b4f7e" stroke-width="1"/><path d="M0.7 0.7 L3.5 3.5 M14.3 0.7 L11.5 3.5 M0.7 13.3 L3.5 10.5 M14.3 13.3 L11.5 10.5" stroke="#2b4f7e" stroke-width="0.9"/></svg>
<svg style="position:absolute;left:1098px;top:32px" width="15" height="14" viewBox="0 0 15 14"><path d="M7.5 0.5 L14.5 13.5 L0.5 13.5 Z" fill="#c8ccd4" stroke="#6f7f99" stroke-width="1"/><path d="M4 7 H11 M2.3 10.2 H12.7 M7.5 0.5 L4 13.5 M7.5 0.5 L11 13.5 M4 7 L7.5 13.5 L11 7" stroke="#f0f0f0" stroke-width="0.7" fill="none"/></svg>
<div class="sep" style="left:1123px;top:31px;height:16px"></div>
<svg style="position:absolute;left:1137px;top:32px" width="17" height="14" viewBox="0 0 17 14"><path d="M0.5 3 H4 L5.5 0.8 H10.5 L12 3 H16.5 V13.5 H0.5 Z" fill="#4a7cbf"/><circle cx="8.5" cy="8" r="3.6" fill="#fff"/><circle cx="8.5" cy="8" r="2.3" fill="#4a7cbf"/><rect x="1.5" y="1.5" width="2" height="1" fill="#4a7cbf"/></svg>
<svg style="position:absolute;left:1162px;top:31px" width="15" height="16" viewBox="0 0 15 16"><rect x="3" y="0.7" width="9" height="5" fill="none" stroke="#4a7cbf" stroke-width="1.3"/><path d="M0.5 5 H14.5 V12 H12.3 V15.3 H2.7 V12 H0.5 Z" fill="#4a7cbf"/><rect x="3.8" y="10" width="7.4" height="4.3" fill="#fff"/><rect x="10.5" y="7.5" width="1.5" height="1.2" fill="#fff"/><rect x="12.5" y="7.5" width="1.2" height="1.2" fill="#fff"/></svg>
<div class="abs" style="left:605.5px;top:50.4px;font-size:11px;line-height:12px;color:#000">-2</div>
<div class="abs" style="left:1289.5px;top:308.4px;font-size:11px;line-height:12px;color:#000">-1</div>
<div class="abs" style="left:1284.7px;top:370.4px;font-size:11px;line-height:12px;color:#000">-2</div>
<svg class="abs" style="left:375px;top:375px" width="80" height="45" viewBox="375 375 80 45">
<path d="M411.4 412.8 L399 400" stroke="#4caf50" stroke-width="1.6"/><path d="M394.1 395 L401.8 397.5 L396.6 402.6 Z" fill="#4caf50"/>
<path d="M411.4 412.8 L411.2 400" stroke="#4a86c8" stroke-width="1.6"/><path d="M411 395.9 L413.7 401.5 L408.4 401.5 Z" fill="#4a86c8"/>
<path d="M411.4 412.8 L429 401" stroke="#e0306a" stroke-width="1.6"/><path d="M434.6 397.7 L431 404.2 L427.1 398.4 Z" fill="#e0306a"/>
</svg>
<div class="abs" style="left:385.5px;top:380px;font-size:13px;line-height:15px;color:#111">y</div>
<div class="abs" style="left:407.5px;top:381px;font-size:13px;line-height:15px;color:#111">z</div>
<div class="abs" style="left:438.8px;top:383px;font-size:13px;line-height:15px;color:#111">x</div>
<!-- bottom messages -->
<div class="abs" style="left:0;top:463px;width:1295px;height:1px;background:#cfcfd2"></div>
<div class="abs" style="left:0;top:492px;width:1295px;height:1px;background:#cfcfd2"></div>
<div class="abs" style="left:-1px;top:469px;width:66px;height:24px;border:1px solid #cfcfd2;border-bottom:none;background:#f8f9fc"></div>
<div class="abs" style="left:1px;top:471px;line-height:24px;font-size:13px;color:#2353a0">Messages</div>
<svg class="abs" style="left:0;top:498px" width="8" height="8"><path d="M1.5 1 L4.5 8" stroke="#333" stroke-width="1.3"/></svg>
<div class="abs" style="left:73px;top:469px;width:60px;height:23px;background:#ebebeb"></div>
<div class="abs" style="left:77px;top:470px;line-height:24px;font-size:13px;color:#1a1a1a">Progress</div>
<div class="abs" style="left:141px;top:469px;width:30px;height:23px;background:#ebebeb"></div>
<div class="abs" style="left:145px;top:470px;line-height:24px;font-size:13px;color:#1a1a1a">Log</div>
</body></html>
